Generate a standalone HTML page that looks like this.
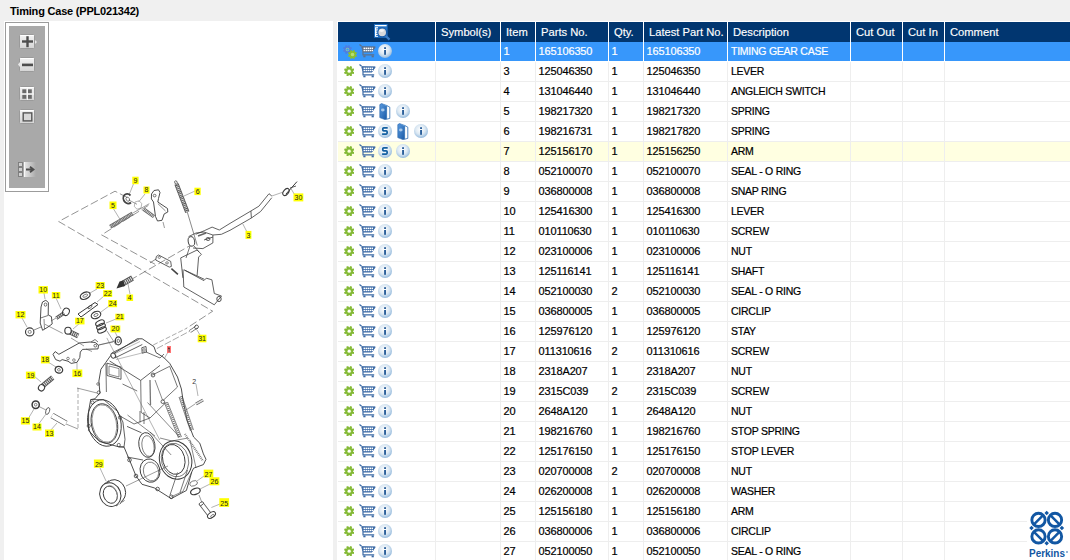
<!DOCTYPE html><html><head><meta charset="utf-8"><style>
*{margin:0;padding:0;box-sizing:border-box}
html,body{width:1070px;height:560px;overflow:hidden;background:#f0f0f0;font-family:"Liberation Sans",sans-serif;position:relative}
.abs{position:absolute}
.ic{position:absolute}
#title{position:absolute;left:10px;top:4px;font-size:11px;font-weight:bold;color:#000;letter-spacing:-0.2px;white-space:nowrap;line-height:14px}
#left{position:absolute;left:4px;top:21px;width:329px;height:539px;background:#fff;overflow:hidden}
#tb{position:absolute;left:1px;top:1px;width:44px;height:170px;border:1px solid #9c9c9c;background:#fff}
#tbi{position:absolute;left:3px;top:3px;width:36px;height:162px;background:#a9a9a9}
#tbl{position:absolute;left:337px;top:21px;width:733px;height:539px;background:#fff;border-top:1px solid #fff;overflow:hidden}
.hd{position:absolute;top:22px;height:20px;background:#013670}
.ht{position:absolute;top:22px;height:20px;line-height:20px;color:#fff;font-size:11.2px;white-space:nowrap;-webkit-text-stroke:0.15px #fff}
.row{position:absolute;left:338px;width:732px;height:20px;border-bottom:1px solid #eeeeee}
.c{position:absolute;height:19px;line-height:19px;font-size:11px;letter-spacing:-0.15px;color:#000;white-space:nowrap;-webkit-text-stroke:0.2px currentColor}
.d{font-size:10.5px;letter-spacing:-0.25px}
.vs{position:absolute;width:1px}
</style></head><body>
<div id="title">Timing Case (PPL021342)</div>
<div id="left">
<div id="tb"><div id="tbi"></div></div>
<svg style="position:absolute;left:-4px;top:-21px" width="340" height="560" viewBox="0 0 340 560"><path d="M127.0 197.4 L115.0 191.2 L58.7 221.5 L212.7 311.2 L186.0 328.6" fill="none" stroke="#666" stroke-width="0.7" stroke-dasharray="8 3"/><path d="M148.4 205.4 L101.6 234.9 L155.1 264.3" fill="none" stroke="#666" stroke-width="0.7" stroke-dasharray="8 3"/><path d="M120.3 285.8 L190.0 245.6" fill="none" stroke="#666" stroke-width="0.7" stroke-dasharray="8 3"/><path d="M133.7 183.4 L129.4 194.0" fill="none" stroke="#666" stroke-width="0.5"/><path d="M145.0 194.0 L138.5 202.0" fill="none" stroke="#666" stroke-width="0.5"/><path d="M113.0 208.0 L121.0 221.0" fill="none" stroke="#666" stroke-width="0.5"/><path d="M195.0 191.0 L184.0 196.0" fill="none" stroke="#666" stroke-width="0.5"/><path d="M242.8 223.9 L247.0 232.0" fill="none" stroke="#666" stroke-width="0.5"/><path d="M291.0 188.6 L294.2 194.0" fill="none" stroke="#666" stroke-width="0.5"/><path d="M271.8 196.0 L282.5 192.3" fill="none" stroke="#666" stroke-width="0.5"/><path d="M130.5 195.5 A4.2 5 -30 1 0 131 202.5" fill="none" stroke="#444" stroke-width="1.8"/><ellipse cx="127.8" cy="199.2" rx="1.6" ry="2.2" transform="rotate(-30 127.8 199.2)" fill="none" stroke="#3a3a3a" stroke-width="0.6"/><path d="M128.9 200.0 L137.0 204.3" fill="none" stroke="#3a3a3a" stroke-width="0.5"/><path d="M135 202 L139 200.8 L141.8 203.5 L141 208 L137 209.2 L134.3 206.5 Z" fill="none" stroke="#999" stroke-width="0.7"/><path d="M133.2 212.8 L149.3 203.7" fill="none" stroke="#3a3a3a" stroke-width="0.5"/><path d="M110.2 226.7 L132.7 213.4" fill="none" stroke="#666" stroke-width="4"/><path d="M110.2 226.7 L132.7 213.4" fill="none" stroke="#d0d0d0" stroke-width="2.4" stroke-dasharray="0.8 0.8"/><path d="M151.5 194.0 L154.0 190.5 L158.5 189.8 L160.0 192.5 L158.5 198.5 L157.8 202.0 L167.5 208.5 L167.8 212.0 L164.2 213.9 L162.0 220.3 L157.5 221.0 L155.5 216.5 L153.5 202.0 L151.4 198.9 Z" fill="none" stroke="#3a3a3a" stroke-width="0.9"/><ellipse cx="154.6" cy="195.6" rx="1.4" ry="1.3" transform="rotate(0 154.6 195.6)" fill="none" stroke="#3a3a3a" stroke-width="0.7"/><path d="M157.8 203.5 L165.5 211.0" fill="none" stroke="#3a3a3a" stroke-width="0.6"/><path d="M143.4 209.0 L154.0 216.6" fill="none" stroke="#666" stroke-width="3.6"/><path d="M143.4 209.0 L154.0 216.6" fill="none" stroke="#e8e8e8" stroke-width="2.2" stroke-dasharray="0.8 0.8"/><path d="M163.0 222.0 L164.5 228.0" fill="none" stroke="#3a3a3a" stroke-width="0.5"/><path d="M176.5 184.0 L187.3 212.1" fill="none" stroke="#555" stroke-width="4.4"/><path d="M176.5 184.0 L187.3 212.1" fill="none" stroke="#d8d8d8" stroke-width="2.8" stroke-dasharray="0.9 0.9"/><ellipse cx="176" cy="182.5" rx="1.2" ry="1.8" transform="rotate(-20 176 182.5)" fill="none" stroke="#3a3a3a" stroke-width="0.7"/><path d="M187.3 212.1 L197.3 245.6" fill="none" stroke="#3a3a3a" stroke-width="0.6"/><path d="M195.7 234.3 L204.3 230.7 L212.1 227.1 L219.3 230.0 L230.0 223.4 L250.9 211.0 L258.9 206.2 L269.0 193.7 L271.8 196.0" fill="none" stroke="#3a3a3a" stroke-width="0.8"/><path d="M212.9 235.0 L221.4 234.3 L230.0 230.3 L251.4 218.0 L260.5 211.6 L271.8 197.7" fill="none" stroke="#3a3a3a" stroke-width="0.8"/><path d="M250.9 211.0 L251.4 218.0" fill="none" stroke="#3a3a3a" stroke-width="0.8"/><ellipse cx="191.4" cy="241.4" rx="3.2" ry="4.8" transform="rotate(-10 191.4 241.4)" fill="none" stroke="#3a3a3a" stroke-width="0.9"/><path d="M188.6 236.6 L196.0 233.0 L204.0 232.0 L212.9 235.0 L212.9 242.9 L202.9 248.6 L193.0 248.0" fill="none" stroke="#3a3a3a" stroke-width="0.8"/><path d="M198.0 236.0 L206.0 233.0" fill="none" stroke="#666" stroke-width="1.6"/><ellipse cx="208" cy="239" rx="2" ry="1.5" transform="rotate(0 208 239)" fill="none" stroke="#3a3a3a" stroke-width="0.8"/><path d="M204.0 240.0 L213.0 237.0" fill="none" stroke="#3a3a3a" stroke-width="0.8"/><path d="M180.7 257.9 L197.1 250.0 L201.4 254.3 L198.6 257.1" fill="none" stroke="#3a3a3a" stroke-width="0.8"/><path d="M180.7 257.9 L182.9 277.9" fill="none" stroke="#3a3a3a" stroke-width="0.8"/><path d="M198.6 257.1 L197.1 275.7" fill="none" stroke="#3a3a3a" stroke-width="0.8"/><path d="M190.0 246.0 L186.0 258.0" fill="none" stroke="#3a3a3a" stroke-width="0.7"/><path d="M194.0 246.0 L199.0 252.0" fill="none" stroke="#3a3a3a" stroke-width="0.7"/><path d="M183.0 269.4 L183.8 287.0 L214.3 304.8 L221.5 296.0 L214.3 293.5 L211.9 279.8 L206.3 278.2 L203.9 280.6 L184.3 270.0" fill="none" stroke="#3a3a3a" stroke-width="0.8"/><ellipse cx="219" cy="299" rx="2.2" ry="2.6" transform="rotate(0 219 299)" fill="none" stroke="#3a3a3a" stroke-width="0.9"/><path d="M156.4 256.4 L158.6 255.0 L170.7 261.4 L171.4 266.4 L169.3 267.1 L155.7 260.0 Z" fill="none" stroke="#3a3a3a" stroke-width="0.8"/><ellipse cx="159.3" cy="257.4" rx="1.2" ry="1" transform="rotate(0 159.3 257.4)" fill="none" stroke="#3a3a3a" stroke-width="0.6"/><ellipse cx="167" cy="262.9" rx="1.4" ry="1.1" transform="rotate(0 167 262.9)" fill="none" stroke="#3a3a3a" stroke-width="0.6"/><path d="M171.4 268.6 L177.9 274.3" fill="none" stroke="#444" stroke-width="1.6"/><path d="M150.0 262.9 L156.0 259.0" fill="none" stroke="#3a3a3a" stroke-width="0.6"/><path d="M184.3 270.0 L204.3 279.3" fill="none" stroke="#3a3a3a" stroke-width="0.8"/><path d="M122.0 284.0 L132.5 278.0" fill="none" stroke="#555" stroke-width="5.5"/><path d="M122.0 284.0 L132.5 278.0" fill="none" stroke="#e8e8e8" stroke-width="3.8" stroke-dasharray="1 1"/><path d="M116.5 288.5 L119.5 281.5 L123.5 280.5 L125 286 Z" fill="#333"/><path d="M128.0 284.0 L130.0 294.0" fill="none" stroke="#666" stroke-width="0.5"/><ellipse cx="286" cy="192" rx="2.4" ry="4" transform="rotate(40 286 192)" fill="none" stroke="#3a3a3a" stroke-width="1.1"/><path d="M286.0 194.0 L297.0 181.6" fill="none" stroke="#3a3a3a" stroke-width="1"/><path d="M290.0 188.0 L296.0 186.0" fill="none" stroke="#3a3a3a" stroke-width="0.8"/><path d="M41.0 307.0 L42.5 302.0 L45.8 300.3 L48.4 302.5 L48.2 315.0 L51.4 316.6 L52.2 323.9 L48.0 327.0 L42.6 330.3 L40.2 323.0 Z" fill="none" stroke="#3a3a3a" stroke-width="0.9"/><ellipse cx="45.5" cy="304.6" rx="1.3" ry="1.6" transform="rotate(0 45.5 304.6)" fill="none" stroke="#3a3a3a" stroke-width="0.7"/><path d="M40.6 318.0 L48.0 315.5" fill="none" stroke="#3a3a3a" stroke-width="0.7"/><path d="M44.0 319.0 L44.5 329.0" fill="none" stroke="#3a3a3a" stroke-width="0.6"/><path d="M44.0 293.0 L45.0 299.0" fill="none" stroke="#666" stroke-width="0.5"/><ellipse cx="29.7" cy="331.9" rx="4.2" ry="4" transform="rotate(0 29.7 331.9)" fill="none" stroke="#3a3a3a" stroke-width="1.1"/><ellipse cx="29.7" cy="331.9" rx="1.6" ry="1.5" transform="rotate(0 29.7 331.9)" fill="none" stroke="#3a3a3a" stroke-width="0.6"/><path d="M22.0 318.0 L27.0 327.0" fill="none" stroke="#666" stroke-width="0.5"/><path d="M34.0 330.0 L41.0 327.0" fill="none" stroke="#3a3a3a" stroke-width="0.6"/><path d="M56.3 318.2 L64.0 313.0" fill="none" stroke="#555" stroke-width="3.6"/><path d="M56.3 318.2 L64.0 313.0" fill="none" stroke="#ddd" stroke-width="2" stroke-dasharray="1 1"/><ellipse cx="66" cy="311.8" rx="3.2" ry="3.8" transform="rotate(30 66 311.8)" fill="none" stroke="#3a3a3a" stroke-width="1"/><path d="M56.0 298.0 L61.0 309.0" fill="none" stroke="#666" stroke-width="0.5"/><path d="M51.0 321.0 L56.0 318.0" fill="none" stroke="#3a3a3a" stroke-width="0.5"/><ellipse cx="85.2" cy="295.7" rx="5.2" ry="3.3" transform="rotate(-25 85.2 295.7)" fill="none" stroke="#3a3a3a" stroke-width="1.3"/><ellipse cx="85.2" cy="295.7" rx="2.6" ry="1.2" transform="rotate(-25 85.2 295.7)" fill="none" stroke="#3a3a3a" stroke-width="0.6"/><path d="M97.0 289.0 L90.0 293.0" fill="none" stroke="#666" stroke-width="0.5"/><path d="M78.0 314.0 L95.0 302.5 L98.0 304.5 L81.0 317.0 Z" fill="none" stroke="#3a3a3a" stroke-width="1"/><ellipse cx="90" cy="307" rx="2.5" ry="1" transform="rotate(-35 90 307)" fill="none" stroke="#3a3a3a" stroke-width="0.7"/><path d="M104.0 296.0 L97.0 302.0" fill="none" stroke="#666" stroke-width="0.5"/><ellipse cx="96" cy="315" rx="5" ry="3.4" transform="rotate(-25 96 315)" fill="none" stroke="#3a3a3a" stroke-width="1.2"/><ellipse cx="96" cy="315" rx="2.3" ry="1.3" transform="rotate(-25 96 315)" fill="none" stroke="#3a3a3a" stroke-width="0.6"/><path d="M109.0 306.0 L101.0 312.0" fill="none" stroke="#666" stroke-width="0.5"/><ellipse cx="100" cy="323" rx="4.6" ry="2.6" transform="rotate(-25 100 323)" fill="none" stroke="#3a3a3a" stroke-width="1.1"/><ellipse cx="101" cy="326.5" rx="4.6" ry="2.6" transform="rotate(-25 101 326.5)" fill="none" stroke="#3a3a3a" stroke-width="1.1"/><ellipse cx="102" cy="330" rx="4.6" ry="2.6" transform="rotate(-25 102 330)" fill="none" stroke="#3a3a3a" stroke-width="1.1"/><path d="M116.0 319.0 L106.0 323.0" fill="none" stroke="#666" stroke-width="0.5"/><path d="M68.0 331.0 L78.2 336.0" fill="none" stroke="#555" stroke-width="5"/><path d="M68.0 331.0 L78.2 336.0" fill="none" stroke="#e6e6e6" stroke-width="3.2" stroke-dasharray="1 1"/><ellipse cx="68" cy="330.7" rx="3.2" ry="3.4" transform="rotate(0 68 330.7)" fill="#fff" stroke="#3a3a3a" stroke-width="1.1"/><path d="M80.0 323.0 L73.0 329.0" fill="none" stroke="#666" stroke-width="0.5"/><ellipse cx="118.3" cy="340.9" rx="3" ry="4" transform="rotate(0 118.3 340.9)" fill="none" stroke="#3a3a3a" stroke-width="1.3"/><ellipse cx="118.3" cy="340.9" rx="1.2" ry="1.7" transform="rotate(0 118.3 340.9)" fill="none" stroke="#3a3a3a" stroke-width="0.7"/><path d="M115.0 332.0 L117.0 336.0" fill="none" stroke="#666" stroke-width="0.5"/><path d="M99.0 345.0 L115.0 341.0" fill="none" stroke="#3a3a3a" stroke-width="0.5"/><path d="M79.3 343.0 L90.0 342.0 L95.3 342.5 L98.5 345.2 L98.0 348.9 L82.5 349.4 L80.3 352.1 L79.8 357.5 L77.1 362.3 L71.2 363.4 L68.0 361.2 L62.1 359.6 L60.0 361.2 L55.7 359.6 L53.0 354.3 L55.2 351.6 L58.9 354.3 Z" fill="none" stroke="#3a3a3a" stroke-width="0.9"/><ellipse cx="95.3" cy="345.7" rx="1.4" ry="1.4" transform="rotate(0 95.3 345.7)" fill="none" stroke="#3a3a3a" stroke-width="0.7"/><ellipse cx="73.9" cy="360.1" rx="1.3" ry="1.3" transform="rotate(0 73.9 360.1)" fill="none" stroke="#3a3a3a" stroke-width="0.6"/><ellipse cx="68" cy="358.5" rx="1.3" ry="1.3" transform="rotate(0 68 358.5)" fill="none" stroke="#3a3a3a" stroke-width="0.6"/><path d="M91.0 342.0 L95.0 339.5 L98.0 342.0" fill="none" stroke="#3a3a3a" stroke-width="0.7"/><path d="M86.0 349.0 L92.0 351.5" fill="none" stroke="#3a3a3a" stroke-width="0.5"/><path d="M98.5 345.0 L113.0 342.0" fill="none" stroke="#3a3a3a" stroke-width="0.5"/><path d="M45.0 324.3 L62.7 333.4" fill="none" stroke="#3a3a3a" stroke-width="0.5"/><path d="M71.0 338.0 L84.0 346.0" fill="none" stroke="#3a3a3a" stroke-width="0.5"/><path d="M107.0 331.0 L116.0 345.0" fill="none" stroke="#3a3a3a" stroke-width="0.5"/><ellipse cx="58.9" cy="369.8" rx="3.8" ry="3.3" transform="rotate(20 58.9 369.8)" fill="none" stroke="#3a3a3a" stroke-width="1.3"/><ellipse cx="58.9" cy="369.8" rx="1.4" ry="1.2" transform="rotate(20 58.9 369.8)" fill="none" stroke="#3a3a3a" stroke-width="0.6"/><path d="M48.0 362.0 L56.0 367.0" fill="none" stroke="#666" stroke-width="0.5"/><path d="M42.5 386.0 L52.7 377.5" fill="none" stroke="#555" stroke-width="5"/><path d="M42.5 386.0 L52.7 377.5" fill="none" stroke="#e4e4e4" stroke-width="3.2" stroke-dasharray="1 1"/><ellipse cx="41.5" cy="387.8" rx="3" ry="3.2" transform="rotate(30 41.5 387.8)" fill="#fff" stroke="#3a3a3a" stroke-width="1.1"/><path d="M34.0 376.0 L41.0 382.0" fill="none" stroke="#666" stroke-width="0.5"/><path d="M77.0 370.0 L77.0 363.0" fill="none" stroke="#666" stroke-width="0.5"/><ellipse cx="35.7" cy="404.7" rx="3.6" ry="3.8" transform="rotate(0 35.7 404.7)" fill="none" stroke="#3a3a3a" stroke-width="1.5"/><ellipse cx="35.7" cy="404.7" rx="1.3" ry="1.4" transform="rotate(0 35.7 404.7)" fill="none" stroke="#3a3a3a" stroke-width="0.6"/><path d="M38.0 406.0 L46.0 410.0" fill="none" stroke="#3a3a3a" stroke-width="0.5"/><ellipse cx="47.7" cy="411" rx="1.8" ry="3.6" transform="rotate(20 47.7 411)" fill="none" stroke="#3a3a3a" stroke-width="0.7"/><path d="M52.0 415.5 L66.0 423.5" fill="none" stroke="#555" stroke-width="6"/><path d="M52.0 415.5 L66.0 423.5" fill="none" stroke="#fff" stroke-width="4.4"/><path d="M28.0 419.0 L34.0 409.0" fill="none" stroke="#666" stroke-width="0.5"/><path d="M38.0 425.0 L46.0 414.0" fill="none" stroke="#666" stroke-width="0.5"/><path d="M50.0 431.0 L57.0 423.0" fill="none" stroke="#666" stroke-width="0.5"/><path d="M66.0 424.0 L78.0 429.0" fill="none" stroke="#3a3a3a" stroke-width="0.5"/><path d="M78.0 388.0 L78.0 428.0" fill="none" stroke="#555" stroke-width="0.5" stroke-dasharray="4 2"/><path d="M77.0 388.0 L97.0 393.0" fill="none" stroke="#3a3a3a" stroke-width="0.5"/><path d="M110.7 355.5 L137.2 338.8 L142.2 338.8 L154.0 346.7 L156.0 352.6 L163.8 357.5 L169.7 363.4 L177.5 377.0 L181.4 389.0 L183.0 400.0 L187.0 420.0 L193.6 437.0 L199.8 443.2 L203.4 453.9 L206.0 459.3 L203.4 464.6 L193.6 468.2 L191.8 471.8 L186.4 490.5 L171.2 498.6 L154.3 487.9 L142.0 484.3 L136.0 476.0 L129.5 460.0 L124.0 447.0 L118.6 446.8 L99.3 441.4 L88.6 430.7 L88.6 411.4 L90.7 399.6 L95.0 398.8 L99.9 392.9 L98.9 381.0 L100.9 369.3 L105.8 362.4 Z" fill="none" stroke="#3a3a3a" stroke-width="0.9"/><path d="M111.8 353.0 L138.6 339.6" fill="none" stroke="#3a3a3a" stroke-width="0.8"/><path d="M115.0 357.9 L142.3 344.5" fill="none" stroke="#3a3a3a" stroke-width="0.8"/><path d="M113.0 354.6 L140.0 341.5" fill="none" stroke="#777" stroke-width="0.5"/><ellipse cx="113.2" cy="355.6" rx="2.2" ry="2.6" transform="rotate(-30 113.2 355.6)" fill="#fff" stroke="#3a3a3a" stroke-width="0.9"/><path d="M141.8 347.7 L146.0 346.5 L146.5 352.0 L142.2 353.2 Z" fill="none" stroke="#3a3a3a" stroke-width="0.8"/><ellipse cx="144" cy="350" rx="1.2" ry="1.4" transform="rotate(0 144 350)" fill="none" stroke="#3a3a3a" stroke-width="0.6"/><path d="M146.0 352.0 L160.0 358.0 L164.0 354.0" fill="none" stroke="#3a3a3a" stroke-width="0.7"/><path d="M109.6 361.0 L140.7 380.4 L160.0 365.4" fill="none" stroke="#3a3a3a" stroke-width="0.8"/><path d="M116.0 359.5 L146.0 352.0" fill="none" stroke="#777" stroke-width="0.5"/><path d="M107.0 363.2 L121.0 367.0 L121.0 379.3 L107.0 375.5 Z" fill="none" stroke="#3a3a3a" stroke-width="0.8"/><path d="M109.0 366.0 L119.0 368.6 L119.0 377.0 L109.0 374.4 Z" fill="none" stroke="#3a3a3a" stroke-width="0.6"/><path d="M105.9 363.2 L106.4 392.0" fill="none" stroke="#3a3a3a" stroke-width="0.7"/><path d="M140.7 380.4 L141.2 412.5" fill="none" stroke="#3a3a3a" stroke-width="0.7"/><path d="M122.5 384.0 L137.2 391.0" fill="none" stroke="#3a3a3a" stroke-width="0.7"/><path d="M152.0 375.2 L169.7 366.3 L177.5 387.0 L162.8 400.7" fill="none" stroke="#3a3a3a" stroke-width="0.7"/><path d="M150.0 380.0 L150.5 405.0" fill="none" stroke="#777" stroke-width="1.3"/><path d="M106.8 337.9 L159.8 440.0" fill="none" stroke="#666" stroke-width="0.5"/><ellipse cx="153" cy="375" rx="1.8" ry="2" transform="rotate(0 153 375)" fill="none" stroke="#3a3a3a" stroke-width="0.8"/><ellipse cx="162.8" cy="401.7" rx="1.8" ry="1.8" transform="rotate(0 162.8 401.7)" fill="none" stroke="#3a3a3a" stroke-width="0.8"/><ellipse cx="98" cy="384" rx="1.3" ry="1.3" transform="rotate(0 98 384)" fill="none" stroke="#3a3a3a" stroke-width="0.6"/><path d="M141.2 412.5 L150.0 418.0 L165.7 402.7" fill="none" stroke="#3a3a3a" stroke-width="0.7"/><path d="M164.5 403.0 L178.5 438.0" fill="none" stroke="#3a3a3a" stroke-width="0.6"/><path d="M167.5 402.0 L181.5 437.0" fill="none" stroke="#3a3a3a" stroke-width="0.6"/><path d="M166.0 402.5 L180.0 437.5" fill="none" stroke="#666" stroke-width="2.4" stroke-dasharray="0.9 1.1"/><path d="M179.0 397.0 L190.5 431.0" fill="none" stroke="#3a3a3a" stroke-width="0.6"/><path d="M182.0 396.0 L193.5 430.0" fill="none" stroke="#3a3a3a" stroke-width="0.6"/><path d="M180.5 396.5 L192.0 430.5" fill="none" stroke="#666" stroke-width="2.4" stroke-dasharray="0.9 1.1"/><path d="M120.0 416.0 L134.0 424.0 L150.0 418.0" fill="none" stroke="#3a3a3a" stroke-width="0.7"/><path d="M118.6 446.8 L124.0 447.0 L125.0 439.3 L122.9 422.0 L117.5 411.4 L103.6 399.6 L90.7 399.6" fill="none" stroke="#3a3a3a" stroke-width="0.8"/><ellipse cx="104.4" cy="423" rx="16.5" ry="23.5" transform="rotate(-12 104.4 423)" fill="none" stroke="#3a3a3a" stroke-width="0.9"/><ellipse cx="104.4" cy="423.5" rx="13" ry="20" transform="rotate(-12 104.4 423.5)" fill="none" stroke="#3a3a3a" stroke-width="0.9"/><ellipse cx="104.4" cy="423.5" rx="12" ry="19" transform="rotate(-12 104.4 423.5)" fill="none" stroke="#3a3a3a" stroke-width="0.5"/><ellipse cx="92.5" cy="402.5" rx="1.6" ry="1.6" transform="rotate(0 92.5 402.5)" fill="none" stroke="#3a3a3a" stroke-width="0.7"/><ellipse cx="88.75" cy="426" rx="1.6" ry="1.6" transform="rotate(0 88.75 426)" fill="none" stroke="#3a3a3a" stroke-width="0.7"/><ellipse cx="118.75" cy="445" rx="1.6" ry="1.6" transform="rotate(0 118.75 445)" fill="none" stroke="#3a3a3a" stroke-width="0.7"/><ellipse cx="120" cy="417.5" rx="1.6" ry="1.6" transform="rotate(0 120 417.5)" fill="none" stroke="#3a3a3a" stroke-width="0.7"/><ellipse cx="98.75" cy="392.5" rx="1.6" ry="1.6" transform="rotate(0 98.75 392.5)" fill="none" stroke="#3a3a3a" stroke-width="0.7"/><path d="M127.0 426.4 L141.5 432.8" fill="none" stroke="#3a3a3a" stroke-width="0.8"/><path d="M127.0 457.0 L143.0 460.0" fill="none" stroke="#3a3a3a" stroke-width="0.8"/><ellipse cx="146.9" cy="445" rx="8" ry="12.5" transform="rotate(-10 146.9 445)" fill="none" stroke="#3a3a3a" stroke-width="0.9"/><ellipse cx="148" cy="446" rx="6" ry="10.5" transform="rotate(-10 148 446)" fill="none" stroke="#3a3a3a" stroke-width="0.6"/><path d="M140.0 411.0 L140.0 422.5" fill="none" stroke="#3a3a3a" stroke-width="0.7"/><path d="M144.0 412.0 L144.0 424.0" fill="none" stroke="#3a3a3a" stroke-width="0.7"/><ellipse cx="175.6" cy="460" rx="16" ry="19.5" transform="rotate(-15 175.6 460)" fill="none" stroke="#3a3a3a" stroke-width="1"/><ellipse cx="175" cy="460" rx="13.5" ry="17" transform="rotate(-15 175 460)" fill="none" stroke="#3a3a3a" stroke-width="0.6"/><ellipse cx="173.75" cy="459.4" rx="11" ry="15.2" transform="rotate(-15 173.75 459.4)" fill="none" stroke="#3a3a3a" stroke-width="0.9"/><path d="M190.0 440.0 L196.0 468.0" fill="none" stroke="#3a3a3a" stroke-width="0.6"/><path d="M177.5 472.5 L170.0 495.0" fill="none" stroke="#3a3a3a" stroke-width="0.7"/><path d="M187.5 470.0 L180.0 492.5" fill="none" stroke="#3a3a3a" stroke-width="0.7"/><path d="M147.5 402.5 L180.0 437.5" fill="none" stroke="#3a3a3a" stroke-width="0.6"/><path d="M127.5 415.0 L155.0 436.0" fill="none" stroke="#3a3a3a" stroke-width="0.6"/><path d="M155.0 380.0 L162.5 400.0" fill="none" stroke="#3a3a3a" stroke-width="0.6"/><path d="M185.0 434.0 L203.0 461.0" fill="none" stroke="#777" stroke-width="2.2" stroke-dasharray="0.8 1"/><path d="M160.0 438.0 L172.0 441.0 L188.0 438.0" fill="none" stroke="#3a3a3a" stroke-width="0.6"/><ellipse cx="150" cy="470.6" rx="9.8" ry="11.8" transform="rotate(-15 150 470.6)" fill="none" stroke="#3a3a3a" stroke-width="0.9"/><ellipse cx="151" cy="471.5" rx="7.5" ry="9.5" transform="rotate(-15 151 471.5)" fill="none" stroke="#3a3a3a" stroke-width="0.6"/><ellipse cx="129.5" cy="460" rx="1.8" ry="1.8" transform="rotate(0 129.5 460)" fill="none" stroke="#3a3a3a" stroke-width="0.8"/><ellipse cx="136" cy="476" rx="1.8" ry="1.8" transform="rotate(0 136 476)" fill="none" stroke="#3a3a3a" stroke-width="0.8"/><ellipse cx="157.6" cy="489" rx="1.8" ry="1.8" transform="rotate(0 157.6 489)" fill="none" stroke="#3a3a3a" stroke-width="0.8"/><ellipse cx="171.25" cy="496.8" rx="1.8" ry="1.8" transform="rotate(0 171.25 496.8)" fill="none" stroke="#3a3a3a" stroke-width="0.8"/><path d="M182.9 491.4 L191.8 471.8" fill="none" stroke="#3a3a3a" stroke-width="0.6"/><path d="M182.9 491.4 L171.2 496.8" fill="none" stroke="#3a3a3a" stroke-width="0.6"/><path d="M171.2 455.0 L150.0 432.0" fill="none" stroke="#3a3a3a" stroke-width="0.6"/><path d="M196.0 384.0 L198.0 396.0" fill="none" stroke="#666" stroke-width="0.5"/><path d="M196.0 404.0 L203.0 400.0" fill="none" stroke="#555" stroke-width="3"/><path d="M196.0 404.0 L203.0 400.0" fill="none" stroke="#ddd" stroke-width="1.6"/><path d="M186.0 410.0 L195.0 404.0" fill="none" stroke="#3a3a3a" stroke-width="0.5"/><path d="M153.2 345.0 L186.0 328.6" fill="none" stroke="#555" stroke-width="0.5" stroke-dasharray="5 2"/><path d="M156.8 348.6 L190.0 331.0" fill="none" stroke="#555" stroke-width="0.5" stroke-dasharray="7 2"/><path d="M190.0 331.5 L196.0 327.5" fill="none" stroke="#555" stroke-width="3.2"/><path d="M190.0 331.5 L196.0 327.5" fill="none" stroke="#fff" stroke-width="1.8"/><ellipse cx="196.5" cy="327" rx="1.8" ry="2" transform="rotate(30 196.5 327)" fill="none" stroke="#3a3a3a" stroke-width="0.8"/><path d="M197.0 330.0 L200.0 335.0" fill="none" stroke="#666" stroke-width="0.5"/><path d="M167.5 353.0 L164.0 359.0" fill="none" stroke="#666" stroke-width="0.5"/><ellipse cx="115" cy="491.5" rx="10.4" ry="12" transform="rotate(-20 115 491.5)" fill="#fff" stroke="#3a3a3a" stroke-width="0.9"/><path d="M101 489 L106 486 M119.5 503.5 L124.5 500.5 M104 484 L109 480.5 M116 506 L121 503" stroke="#3a3a3a" stroke-width="0.7"/><polygon points="101,490 106,485 125,494 119,505" fill="#fff"/><ellipse cx="110.3" cy="494.6" rx="10.4" ry="12" transform="rotate(-20 110.3 494.6)" fill="#fff" stroke="#3a3a3a" stroke-width="1"/><ellipse cx="110.3" cy="494.7" rx="6.8" ry="8.8" transform="rotate(-20 110.3 494.7)" fill="none" stroke="#3a3a3a" stroke-width="0.9"/><path d="M107.5 486.5 A5 8 -20 0 1 116 501" fill="none" stroke="#888" stroke-width="0.6"/><path d="M100.0 468.0 L106.0 481.0" fill="none" stroke="#666" stroke-width="0.5"/><path d="M126.0 486.0 L168.0 466.0" fill="none" stroke="#3a3a3a" stroke-width="0.5"/><ellipse cx="193.6" cy="483.4" rx="4" ry="2.5" transform="rotate(-20 193.6 483.4)" fill="none" stroke="#3a3a3a" stroke-width="0.6"/><ellipse cx="195.4" cy="491.4" rx="5" ry="3" transform="rotate(-20 195.4 491.4)" fill="none" stroke="#3a3a3a" stroke-width="1.3"/><path d="M199.0 495.0 L202.5 504.0" fill="none" stroke="#3a3a3a" stroke-width="0.5"/><path d="M201.5 504.0 L209.5 514.5" fill="none" stroke="#555" stroke-width="5"/><path d="M201.5 504.0 L209.5 514.5" fill="none" stroke="#fff" stroke-width="3.4"/><ellipse cx="201.3" cy="503.7" rx="2.4" ry="1.5" transform="rotate(-35 201.3 503.7)" fill="#fff" stroke="#3a3a3a" stroke-width="0.8"/><ellipse cx="211.5" cy="515" rx="4.5" ry="2.6" transform="rotate(-35 211.5 515)" fill="#fff" stroke="#3a3a3a" stroke-width="1"/><ellipse cx="212.5" cy="516" rx="2" ry="1.2" transform="rotate(-35 212.5 516)" fill="none" stroke="#3a3a3a" stroke-width="0.6"/><path d="M211.4 507.5 L220.0 504.0" fill="none" stroke="#666" stroke-width="0.5"/><path d="M197.0 481.0 L204.0 476.0" fill="none" stroke="#666" stroke-width="0.5"/><path d="M200.0 489.0 L210.0 484.0" fill="none" stroke="#666" stroke-width="0.5"/><rect x="132.3" y="176.7" width="6.3" height="7.5" fill="#ffff00"/><text x="135.4" y="183.1" text-anchor="middle" font-size="7" font-family="Liberation Sans" fill="#222">9</text><rect x="143.5" y="186.5" width="6.0" height="7.0" fill="#ffff00"/><text x="146.5" y="192.4" text-anchor="middle" font-size="7" font-family="Liberation Sans" fill="#222">8</text><rect x="109.5" y="201.5" width="7.0" height="7.6" fill="#ffff00"/><text x="113.0" y="208.0" text-anchor="middle" font-size="7" font-family="Liberation Sans" fill="#222">5</text><rect x="194.4" y="187.7" width="6.3" height="7.4" fill="#ffff00"/><text x="197.6" y="194.0" text-anchor="middle" font-size="7" font-family="Liberation Sans" fill="#222">6</text><rect x="245.5" y="230.9" width="5.9" height="8.0" fill="#ffff00"/><text x="248.4" y="237.8" text-anchor="middle" font-size="7" font-family="Liberation Sans" fill="#222">3</text><rect x="293.5" y="193.4" width="9.8" height="8.0" fill="#ffff00"/><text x="298.4" y="200.3" text-anchor="middle" font-size="7" font-family="Liberation Sans" fill="#222">30</text><rect x="38.5" y="286.1" width="9.4" height="7.4" fill="#ffff00"/><text x="43.2" y="292.4" text-anchor="middle" font-size="7" font-family="Liberation Sans" fill="#222">10</text><rect x="51.8" y="292.0" width="8.5" height="6.6" fill="#ffff00"/><text x="56.0" y="297.5" text-anchor="middle" font-size="7" font-family="Liberation Sans" fill="#222">11</text><rect x="15.5" y="311.0" width="10.0" height="7.4" fill="#ffff00"/><text x="20.5" y="317.3" text-anchor="middle" font-size="7" font-family="Liberation Sans" fill="#222">12</text><rect x="95.6" y="282.0" width="9.1" height="7.0" fill="#ffff00"/><text x="100.2" y="287.9" text-anchor="middle" font-size="7" font-family="Liberation Sans" fill="#222">23</text><rect x="103.2" y="290.1" width="9.0" height="6.9" fill="#ffff00"/><text x="107.7" y="295.9" text-anchor="middle" font-size="7" font-family="Liberation Sans" fill="#222">22</text><rect x="108.2" y="300.0" width="8.9" height="7.2" fill="#ffff00"/><text x="112.7" y="306.1" text-anchor="middle" font-size="7" font-family="Liberation Sans" fill="#222">24</text><rect x="115.3" y="313.7" width="9.0" height="6.6" fill="#ffff00"/><text x="119.8" y="319.2" text-anchor="middle" font-size="7" font-family="Liberation Sans" fill="#222">21</text><rect x="75.1" y="317.7" width="9.4" height="6.7" fill="#ffff00"/><text x="79.8" y="323.3" text-anchor="middle" font-size="7" font-family="Liberation Sans" fill="#222">17</text><rect x="110.5" y="325.5" width="9.8" height="6.9" fill="#ffff00"/><text x="115.4" y="331.3" text-anchor="middle" font-size="7" font-family="Liberation Sans" fill="#222">20</text><rect x="126.5" y="294.5" width="6.6" height="6.5" fill="#ffff00"/><text x="129.8" y="299.9" text-anchor="middle" font-size="7" font-family="Liberation Sans" fill="#222">4</text><rect x="40.9" y="355.9" width="8.7" height="7.5" fill="#ffff00"/><text x="45.2" y="362.3" text-anchor="middle" font-size="7" font-family="Liberation Sans" fill="#222">18</text><rect x="25.9" y="371.6" width="9.4" height="7.3" fill="#ffff00"/><text x="30.6" y="377.8" text-anchor="middle" font-size="7" font-family="Liberation Sans" fill="#222">19</text><rect x="72.4" y="369.5" width="9.9" height="7.6" fill="#ffff00"/><text x="77.3" y="376.0" text-anchor="middle" font-size="7" font-family="Liberation Sans" fill="#222">16</text><rect x="20.9" y="417.2" width="9.1" height="7.3" fill="#ffff00"/><text x="25.4" y="423.4" text-anchor="middle" font-size="7" font-family="Liberation Sans" fill="#222">15</text><rect x="32.5" y="423.5" width="9.0" height="7.0" fill="#ffff00"/><text x="37.0" y="429.4" text-anchor="middle" font-size="7" font-family="Liberation Sans" fill="#222">14</text><rect x="45.0" y="429.5" width="9.1" height="7.4" fill="#ffff00"/><text x="49.5" y="435.8" text-anchor="middle" font-size="7" font-family="Liberation Sans" fill="#222">13</text><rect x="197.7" y="334.7" width="8.7" height="7.6" fill="#ffff00"/><text x="202.1" y="341.2" text-anchor="middle" font-size="7" font-family="Liberation Sans" fill="#222">31</text><rect x="93.9" y="459.5" width="9.8" height="8.3" fill="#ffff00"/><text x="98.8" y="466.7" text-anchor="middle" font-size="7" font-family="Liberation Sans" fill="#222">29</text><rect x="203.7" y="469.6" width="9.6" height="8.0" fill="#ffff00"/><text x="208.5" y="476.5" text-anchor="middle" font-size="7" font-family="Liberation Sans" fill="#222">27</text><rect x="209.5" y="477.3" width="9.9" height="8.0" fill="#ffff00"/><text x="214.4" y="484.2" text-anchor="middle" font-size="7" font-family="Liberation Sans" fill="#222">26</text><rect x="219.3" y="498.2" width="9.8" height="8.7" fill="#ffff00"/><text x="224.2" y="505.8" text-anchor="middle" font-size="7" font-family="Liberation Sans" fill="#222">25</text><rect x="167" y="346" width="4" height="7" fill="#ff7272"/><rect x="168.6" y="348" width="1" height="4" fill="#555"/><rect x="168.2" y="347.6" width="1.4" height="1.1" fill="#300"/><text x="194.3" y="383.5" text-anchor="middle" font-size="7" font-family="Liberation Sans" fill="#333">2</text></svg>
</div>

<div class="abs" style="left:333px;top:21px;width:4px;height:539px;background:#f0f0f0"></div>
<div class="abs" style="left:337px;top:21px;width:733px;height:539px;background:#fff"></div>
<div class="hd" style="left:338px;width:732px"></div>
<div class="ht" style="left:441px">Symbol(s)</div>
<div class="ht" style="left:506px">Item</div>
<div class="ht" style="left:541px">Parts No.</div>
<div class="ht" style="left:614px">Qty.</div>
<div class="ht" style="left:649px">Latest Part No.</div>
<div class="ht" style="left:733px">Description</div>
<div class="ht" style="left:856px">Cut Out</div>
<div class="ht" style="left:908px">Cut In</div>
<div class="ht" style="left:950px">Comment</div>
<svg class="ic" style="left:370px;top:22px" width="25" height="20" viewBox="0 0 25 20"><rect x="4" y="2" width="13.6" height="13.8" fill="#1f70c4"/><rect x="5" y="3" width="11.6" height="1.3" fill="#fff"/><rect x="5" y="5.2" width="3" height="9.6" fill="#fff"/><rect x="6.2" y="6.4" width="1.8" height="1" fill="#1f70c4"/><rect x="6.2" y="8.6" width="1.8" height="1" fill="#1f70c4"/><rect x="6.2" y="10.8" width="1.8" height="1" fill="#1f70c4"/><rect x="6.2" y="13" width="1.8" height="1" fill="#1f70c4"/><path d="M15.3 13.5 L19.5 17.6" stroke="#3b7cc6" stroke-width="2.2"/><circle cx="12.2" cy="10.4" r="4.4" fill="#d6d8db" stroke="#1b5eac" stroke-width="1.2"/><ellipse cx="11.6" cy="8.6" rx="2.4" ry="1.3" fill="#f4f4f4"/></svg>
<div class="row" style="top:42px;background:#3797fb;border-bottom-color:#fff"></div>
<div class="vs" style="left:435px;top:42px;height:20px;background:#fff"></div>
<div class="vs" style="left:500px;top:42px;height:20px;background:#fff"></div>
<div class="vs" style="left:535px;top:42px;height:20px;background:#fff"></div>
<div class="vs" style="left:608px;top:42px;height:20px;background:#fff"></div>
<div class="vs" style="left:643px;top:42px;height:20px;background:#fff"></div>
<div class="vs" style="left:727px;top:42px;height:20px;background:#fff"></div>
<div class="vs" style="left:850px;top:42px;height:20px;background:#fff"></div>
<div class="vs" style="left:902px;top:42px;height:20px;background:#fff"></div>
<div class="vs" style="left:944px;top:42px;height:20px;background:#fff"></div>
<div class="c" style="left:503.6px;top:42px;color:#fff">1</div>
<div class="c" style="left:538.6px;top:42px;color:#fff">165106350</div>
<div class="c" style="left:611.6px;top:42px;color:#fff">1</div>
<div class="c" style="left:646.6px;top:42px;color:#fff">165106350</div>
<div class="c d" style="left:731px;top:42px;color:#fff">TIMING GEAR CASE</div>
<svg class="ic" style="left:342.5px;top:44.5px" width="9" height="9" viewBox="0 0 11 11"><g fill="#4f7fe0" transform="rotate(22.5 5.5 5.5)"><circle cx="5.5" cy="5.5" r="4"/><rect x="4.3" y="0" width="2.4" height="11" rx="0.6"/><rect x="0" y="4.3" width="11" height="2.4" rx="0.6"/><rect x="4.3" y="0" width="2.4" height="11" rx="0.6" transform="rotate(45 5.5 5.5)"/><rect x="4.3" y="0" width="2.4" height="11" rx="0.6" transform="rotate(-45 5.5 5.5)"/></g><circle cx="5.5" cy="5.5" r="2.1" fill="#b5db7a"/><circle cx="5.5" cy="5.5" r="1.5" fill="#3797fb"/></svg>
<svg class="ic" style="left:347.5px;top:49.5px" width="9" height="9" viewBox="0 0 11 11"><g fill="#8cc030" transform="rotate(22.5 5.5 5.5)"><circle cx="5.5" cy="5.5" r="4"/><rect x="4.3" y="0" width="2.4" height="11" rx="0.6"/><rect x="0" y="4.3" width="11" height="2.4" rx="0.6"/><rect x="4.3" y="0" width="2.4" height="11" rx="0.6" transform="rotate(45 5.5 5.5)"/><rect x="4.3" y="0" width="2.4" height="11" rx="0.6" transform="rotate(-45 5.5 5.5)"/></g><circle cx="5.5" cy="5.5" r="2.1" fill="#b5db7a"/><circle cx="5.5" cy="5.5" r="1.5" fill="#b8e070"/></svg>
<svg class="ic" style="left:359px;top:44px" width="17" height="14" viewBox="0 0 17 14"><path d="M0.5 0.6 L2.6 2.2" stroke="#5f7089" stroke-width="1.3" fill="none"/><path d="M2.8 2.7 L16.2 2.9 L13 8 L4 8 Z" fill="#5f7089" stroke="#5f7089" stroke-width="1"/><rect x="4.55" y="3.5999999999999996" width="1.5" height="1.4" fill="#fff"/><rect x="6.55" y="3.5999999999999996" width="1.5" height="1.4" fill="#fff"/><rect x="8.55" y="3.5999999999999996" width="1.5" height="1.4" fill="#fff"/><rect x="10.55" y="3.5999999999999996" width="1.5" height="1.4" fill="#fff"/><rect x="12.55" y="3.5999999999999996" width="1.5" height="1.4" fill="#fff"/><rect x="4.55" y="5.8" width="1.5" height="1.4" fill="#fff"/><rect x="6.55" y="5.8" width="1.5" height="1.4" fill="#fff"/><rect x="8.55" y="5.8" width="1.5" height="1.4" fill="#fff"/><rect x="10.55" y="5.8" width="1.5" height="1.4" fill="#fff"/><rect x="12.55" y="5.8" width="1.5" height="1.4" fill="#fff"/><path d="M4 8 V10.8 H15.2" stroke="#5f7089" stroke-width="1.2" fill="none"/><rect x="4.3" y="11.5" width="2.2" height="1.8" fill="#5f7089"/><rect x="12.6" y="11.5" width="2.2" height="1.8" fill="#5f7089"/></svg>
<svg class="ic" style="left:378px;top:44px" width="14" height="14" viewBox="0 0 14 14"><defs><radialGradient id="g37844" cx="0.45" cy="0.4" r="0.6"><stop offset="0" stop-color="#ffffff"/><stop offset="0.55" stop-color="#dde9f3"/><stop offset="0.8" stop-color="#b8d1e8"/><stop offset="1" stop-color="#93b9dc"/></radialGradient></defs><circle cx="7" cy="7" r="7" fill="url(#g37844)"/><rect x="6.1" y="3.2" width="1.9" height="1.8" fill="#2b5f9a"/><rect x="6.1" y="6" width="1.9" height="4.8" fill="#2b5f9a"/></svg>
<div class="row" style="top:62px;background:#fff;border-bottom-color:#eeeeee"></div>
<div class="vs" style="left:435px;top:62px;height:20px;background:#eeeeee"></div>
<div class="vs" style="left:500px;top:62px;height:20px;background:#eeeeee"></div>
<div class="vs" style="left:535px;top:62px;height:20px;background:#eeeeee"></div>
<div class="vs" style="left:608px;top:62px;height:20px;background:#eeeeee"></div>
<div class="vs" style="left:643px;top:62px;height:20px;background:#eeeeee"></div>
<div class="vs" style="left:727px;top:62px;height:20px;background:#eeeeee"></div>
<div class="vs" style="left:850px;top:62px;height:20px;background:#eeeeee"></div>
<div class="vs" style="left:902px;top:62px;height:20px;background:#eeeeee"></div>
<div class="vs" style="left:944px;top:62px;height:20px;background:#eeeeee"></div>
<div class="c" style="left:503.6px;top:62px;color:#000">3</div>
<div class="c" style="left:538.6px;top:62px;color:#000">125046350</div>
<div class="c" style="left:611.6px;top:62px;color:#000">1</div>
<div class="c" style="left:646.6px;top:62px;color:#000">125046350</div>
<div class="c d" style="left:731px;top:62px;color:#000">LEVER</div>
<svg class="ic" style="left:343.7px;top:65.6px" width="10.4" height="10.4" viewBox="0 0 11 11"><g fill="#84b936" transform="rotate(22.5 5.5 5.5)"><circle cx="5.5" cy="5.5" r="4"/><rect x="4.3" y="0" width="2.4" height="11" rx="0.6"/><rect x="0" y="4.3" width="11" height="2.4" rx="0.6"/><rect x="4.3" y="0" width="2.4" height="11" rx="0.6" transform="rotate(45 5.5 5.5)"/><rect x="4.3" y="0" width="2.4" height="11" rx="0.6" transform="rotate(-45 5.5 5.5)"/></g><circle cx="5.5" cy="5.5" r="2.1" fill="#b5db7a"/><circle cx="5.5" cy="5.5" r="1.5" fill="#fff"/></svg>
<svg class="ic" style="left:359px;top:64px" width="17" height="14" viewBox="0 0 17 14"><path d="M0.5 0.6 L2.6 2.2" stroke="#3d6ba6" stroke-width="1.3" fill="none"/><path d="M2.8 2.7 L16.2 2.9 L13 8 L4 8 Z" fill="#3d6ba6" stroke="#3d6ba6" stroke-width="1"/><rect x="4.55" y="3.5999999999999996" width="1.5" height="1.4" fill="#fff"/><rect x="6.55" y="3.5999999999999996" width="1.5" height="1.4" fill="#fff"/><rect x="8.55" y="3.5999999999999996" width="1.5" height="1.4" fill="#fff"/><rect x="10.55" y="3.5999999999999996" width="1.5" height="1.4" fill="#fff"/><rect x="12.55" y="3.5999999999999996" width="1.5" height="1.4" fill="#fff"/><rect x="4.55" y="5.8" width="1.5" height="1.4" fill="#fff"/><rect x="6.55" y="5.8" width="1.5" height="1.4" fill="#fff"/><rect x="8.55" y="5.8" width="1.5" height="1.4" fill="#fff"/><rect x="10.55" y="5.8" width="1.5" height="1.4" fill="#fff"/><rect x="12.55" y="5.8" width="1.5" height="1.4" fill="#fff"/><path d="M4 8 V10.8 H15.2" stroke="#3d6ba6" stroke-width="1.2" fill="none"/><rect x="4.3" y="11.5" width="2.2" height="1.8" fill="#3d6ba6"/><rect x="12.6" y="11.5" width="2.2" height="1.8" fill="#3d6ba6"/></svg>
<svg class="ic" style="left:378px;top:64px" width="14" height="14" viewBox="0 0 14 14"><defs><radialGradient id="g37864" cx="0.45" cy="0.4" r="0.6"><stop offset="0" stop-color="#ffffff"/><stop offset="0.55" stop-color="#dde9f3"/><stop offset="0.8" stop-color="#b8d1e8"/><stop offset="1" stop-color="#93b9dc"/></radialGradient></defs><circle cx="7" cy="7" r="7" fill="url(#g37864)"/><rect x="6.1" y="3.2" width="1.9" height="1.8" fill="#2b5f9a"/><rect x="6.1" y="6" width="1.9" height="4.8" fill="#2b5f9a"/></svg>
<div class="row" style="top:82px;background:#fff;border-bottom-color:#eeeeee"></div>
<div class="vs" style="left:435px;top:82px;height:20px;background:#eeeeee"></div>
<div class="vs" style="left:500px;top:82px;height:20px;background:#eeeeee"></div>
<div class="vs" style="left:535px;top:82px;height:20px;background:#eeeeee"></div>
<div class="vs" style="left:608px;top:82px;height:20px;background:#eeeeee"></div>
<div class="vs" style="left:643px;top:82px;height:20px;background:#eeeeee"></div>
<div class="vs" style="left:727px;top:82px;height:20px;background:#eeeeee"></div>
<div class="vs" style="left:850px;top:82px;height:20px;background:#eeeeee"></div>
<div class="vs" style="left:902px;top:82px;height:20px;background:#eeeeee"></div>
<div class="vs" style="left:944px;top:82px;height:20px;background:#eeeeee"></div>
<div class="c" style="left:503.6px;top:82px;color:#000">4</div>
<div class="c" style="left:538.6px;top:82px;color:#000">131046440</div>
<div class="c" style="left:611.6px;top:82px;color:#000">1</div>
<div class="c" style="left:646.6px;top:82px;color:#000">131046440</div>
<div class="c d" style="left:731px;top:82px;color:#000">ANGLEICH SWITCH</div>
<svg class="ic" style="left:343.7px;top:85.6px" width="10.4" height="10.4" viewBox="0 0 11 11"><g fill="#84b936" transform="rotate(22.5 5.5 5.5)"><circle cx="5.5" cy="5.5" r="4"/><rect x="4.3" y="0" width="2.4" height="11" rx="0.6"/><rect x="0" y="4.3" width="11" height="2.4" rx="0.6"/><rect x="4.3" y="0" width="2.4" height="11" rx="0.6" transform="rotate(45 5.5 5.5)"/><rect x="4.3" y="0" width="2.4" height="11" rx="0.6" transform="rotate(-45 5.5 5.5)"/></g><circle cx="5.5" cy="5.5" r="2.1" fill="#b5db7a"/><circle cx="5.5" cy="5.5" r="1.5" fill="#fff"/></svg>
<svg class="ic" style="left:359px;top:84px" width="17" height="14" viewBox="0 0 17 14"><path d="M0.5 0.6 L2.6 2.2" stroke="#3d6ba6" stroke-width="1.3" fill="none"/><path d="M2.8 2.7 L16.2 2.9 L13 8 L4 8 Z" fill="#3d6ba6" stroke="#3d6ba6" stroke-width="1"/><rect x="4.55" y="3.5999999999999996" width="1.5" height="1.4" fill="#fff"/><rect x="6.55" y="3.5999999999999996" width="1.5" height="1.4" fill="#fff"/><rect x="8.55" y="3.5999999999999996" width="1.5" height="1.4" fill="#fff"/><rect x="10.55" y="3.5999999999999996" width="1.5" height="1.4" fill="#fff"/><rect x="12.55" y="3.5999999999999996" width="1.5" height="1.4" fill="#fff"/><rect x="4.55" y="5.8" width="1.5" height="1.4" fill="#fff"/><rect x="6.55" y="5.8" width="1.5" height="1.4" fill="#fff"/><rect x="8.55" y="5.8" width="1.5" height="1.4" fill="#fff"/><rect x="10.55" y="5.8" width="1.5" height="1.4" fill="#fff"/><rect x="12.55" y="5.8" width="1.5" height="1.4" fill="#fff"/><path d="M4 8 V10.8 H15.2" stroke="#3d6ba6" stroke-width="1.2" fill="none"/><rect x="4.3" y="11.5" width="2.2" height="1.8" fill="#3d6ba6"/><rect x="12.6" y="11.5" width="2.2" height="1.8" fill="#3d6ba6"/></svg>
<svg class="ic" style="left:378px;top:84px" width="14" height="14" viewBox="0 0 14 14"><defs><radialGradient id="g37884" cx="0.45" cy="0.4" r="0.6"><stop offset="0" stop-color="#ffffff"/><stop offset="0.55" stop-color="#dde9f3"/><stop offset="0.8" stop-color="#b8d1e8"/><stop offset="1" stop-color="#93b9dc"/></radialGradient></defs><circle cx="7" cy="7" r="7" fill="url(#g37884)"/><rect x="6.1" y="3.2" width="1.9" height="1.8" fill="#2b5f9a"/><rect x="6.1" y="6" width="1.9" height="4.8" fill="#2b5f9a"/></svg>
<div class="row" style="top:102px;background:#fff;border-bottom-color:#eeeeee"></div>
<div class="vs" style="left:435px;top:102px;height:20px;background:#eeeeee"></div>
<div class="vs" style="left:500px;top:102px;height:20px;background:#eeeeee"></div>
<div class="vs" style="left:535px;top:102px;height:20px;background:#eeeeee"></div>
<div class="vs" style="left:608px;top:102px;height:20px;background:#eeeeee"></div>
<div class="vs" style="left:643px;top:102px;height:20px;background:#eeeeee"></div>
<div class="vs" style="left:727px;top:102px;height:20px;background:#eeeeee"></div>
<div class="vs" style="left:850px;top:102px;height:20px;background:#eeeeee"></div>
<div class="vs" style="left:902px;top:102px;height:20px;background:#eeeeee"></div>
<div class="vs" style="left:944px;top:102px;height:20px;background:#eeeeee"></div>
<div class="c" style="left:503.6px;top:102px;color:#000">5</div>
<div class="c" style="left:538.6px;top:102px;color:#000">198217320</div>
<div class="c" style="left:611.6px;top:102px;color:#000">1</div>
<div class="c" style="left:646.6px;top:102px;color:#000">198217320</div>
<div class="c d" style="left:731px;top:102px;color:#000">SPRING</div>
<svg class="ic" style="left:343.7px;top:105.6px" width="10.4" height="10.4" viewBox="0 0 11 11"><g fill="#84b936" transform="rotate(22.5 5.5 5.5)"><circle cx="5.5" cy="5.5" r="4"/><rect x="4.3" y="0" width="2.4" height="11" rx="0.6"/><rect x="0" y="4.3" width="11" height="2.4" rx="0.6"/><rect x="4.3" y="0" width="2.4" height="11" rx="0.6" transform="rotate(45 5.5 5.5)"/><rect x="4.3" y="0" width="2.4" height="11" rx="0.6" transform="rotate(-45 5.5 5.5)"/></g><circle cx="5.5" cy="5.5" r="2.1" fill="#b5db7a"/><circle cx="5.5" cy="5.5" r="1.5" fill="#fff"/></svg>
<svg class="ic" style="left:359px;top:104px" width="17" height="14" viewBox="0 0 17 14"><path d="M0.5 0.6 L2.6 2.2" stroke="#3d6ba6" stroke-width="1.3" fill="none"/><path d="M2.8 2.7 L16.2 2.9 L13 8 L4 8 Z" fill="#3d6ba6" stroke="#3d6ba6" stroke-width="1"/><rect x="4.55" y="3.5999999999999996" width="1.5" height="1.4" fill="#fff"/><rect x="6.55" y="3.5999999999999996" width="1.5" height="1.4" fill="#fff"/><rect x="8.55" y="3.5999999999999996" width="1.5" height="1.4" fill="#fff"/><rect x="10.55" y="3.5999999999999996" width="1.5" height="1.4" fill="#fff"/><rect x="12.55" y="3.5999999999999996" width="1.5" height="1.4" fill="#fff"/><rect x="4.55" y="5.8" width="1.5" height="1.4" fill="#fff"/><rect x="6.55" y="5.8" width="1.5" height="1.4" fill="#fff"/><rect x="8.55" y="5.8" width="1.5" height="1.4" fill="#fff"/><rect x="10.55" y="5.8" width="1.5" height="1.4" fill="#fff"/><rect x="12.55" y="5.8" width="1.5" height="1.4" fill="#fff"/><path d="M4 8 V10.8 H15.2" stroke="#3d6ba6" stroke-width="1.2" fill="none"/><rect x="4.3" y="11.5" width="2.2" height="1.8" fill="#3d6ba6"/><rect x="12.6" y="11.5" width="2.2" height="1.8" fill="#3d6ba6"/></svg>
<svg class="ic" style="left:379px;top:103px" width="12" height="17" viewBox="0 0 12 17"><defs><linearGradient id="bk" x1="0" y1="0" x2="1" y2="1"><stop offset="0" stop-color="#5a9be0"/><stop offset="1" stop-color="#1a5aa6"/></linearGradient></defs><path d="M0.8 1.6 L2.6 0.6 L7.6 2.4 L7.6 16.2 L5.8 16.6 L0.8 14.6 Z" fill="url(#bk)" stroke="#2060a8" stroke-width="0.6"/><path d="M7.6 2.4 L10.8 4.2 L10.8 15.4 L7.6 16.2 Z" fill="#fff" stroke="#2a6ab0" stroke-width="0.8"/><path d="M2.6 0.6 L7.6 2.4 L10.8 4.2 L6 2.4 Z" fill="#7ab0e6"/><ellipse cx="3.8" cy="7" rx="1.8" ry="1.4" fill="#a9c9ea"/></svg>
<svg class="ic" style="left:396px;top:104px" width="14" height="14" viewBox="0 0 14 14"><defs><radialGradient id="g396104" cx="0.45" cy="0.4" r="0.6"><stop offset="0" stop-color="#ffffff"/><stop offset="0.55" stop-color="#dde9f3"/><stop offset="0.8" stop-color="#b8d1e8"/><stop offset="1" stop-color="#93b9dc"/></radialGradient></defs><circle cx="7" cy="7" r="7" fill="url(#g396104)"/><rect x="6.1" y="3.2" width="1.9" height="1.8" fill="#2b5f9a"/><rect x="6.1" y="6" width="1.9" height="4.8" fill="#2b5f9a"/></svg>
<div class="row" style="top:122px;background:#fff;border-bottom-color:#eeeeee"></div>
<div class="vs" style="left:435px;top:122px;height:20px;background:#eeeeee"></div>
<div class="vs" style="left:500px;top:122px;height:20px;background:#eeeeee"></div>
<div class="vs" style="left:535px;top:122px;height:20px;background:#eeeeee"></div>
<div class="vs" style="left:608px;top:122px;height:20px;background:#eeeeee"></div>
<div class="vs" style="left:643px;top:122px;height:20px;background:#eeeeee"></div>
<div class="vs" style="left:727px;top:122px;height:20px;background:#eeeeee"></div>
<div class="vs" style="left:850px;top:122px;height:20px;background:#eeeeee"></div>
<div class="vs" style="left:902px;top:122px;height:20px;background:#eeeeee"></div>
<div class="vs" style="left:944px;top:122px;height:20px;background:#eeeeee"></div>
<div class="c" style="left:503.6px;top:122px;color:#000">6</div>
<div class="c" style="left:538.6px;top:122px;color:#000">198216731</div>
<div class="c" style="left:611.6px;top:122px;color:#000">1</div>
<div class="c" style="left:646.6px;top:122px;color:#000">198217820</div>
<div class="c d" style="left:731px;top:122px;color:#000">SPRING</div>
<svg class="ic" style="left:343.7px;top:125.6px" width="10.4" height="10.4" viewBox="0 0 11 11"><g fill="#84b936" transform="rotate(22.5 5.5 5.5)"><circle cx="5.5" cy="5.5" r="4"/><rect x="4.3" y="0" width="2.4" height="11" rx="0.6"/><rect x="0" y="4.3" width="11" height="2.4" rx="0.6"/><rect x="4.3" y="0" width="2.4" height="11" rx="0.6" transform="rotate(45 5.5 5.5)"/><rect x="4.3" y="0" width="2.4" height="11" rx="0.6" transform="rotate(-45 5.5 5.5)"/></g><circle cx="5.5" cy="5.5" r="2.1" fill="#b5db7a"/><circle cx="5.5" cy="5.5" r="1.5" fill="#fff"/></svg>
<svg class="ic" style="left:359px;top:124px" width="17" height="14" viewBox="0 0 17 14"><path d="M0.5 0.6 L2.6 2.2" stroke="#3d6ba6" stroke-width="1.3" fill="none"/><path d="M2.8 2.7 L16.2 2.9 L13 8 L4 8 Z" fill="#3d6ba6" stroke="#3d6ba6" stroke-width="1"/><rect x="4.55" y="3.5999999999999996" width="1.5" height="1.4" fill="#fff"/><rect x="6.55" y="3.5999999999999996" width="1.5" height="1.4" fill="#fff"/><rect x="8.55" y="3.5999999999999996" width="1.5" height="1.4" fill="#fff"/><rect x="10.55" y="3.5999999999999996" width="1.5" height="1.4" fill="#fff"/><rect x="12.55" y="3.5999999999999996" width="1.5" height="1.4" fill="#fff"/><rect x="4.55" y="5.8" width="1.5" height="1.4" fill="#fff"/><rect x="6.55" y="5.8" width="1.5" height="1.4" fill="#fff"/><rect x="8.55" y="5.8" width="1.5" height="1.4" fill="#fff"/><rect x="10.55" y="5.8" width="1.5" height="1.4" fill="#fff"/><rect x="12.55" y="5.8" width="1.5" height="1.4" fill="#fff"/><path d="M4 8 V10.8 H15.2" stroke="#3d6ba6" stroke-width="1.2" fill="none"/><rect x="4.3" y="11.5" width="2.2" height="1.8" fill="#3d6ba6"/><rect x="12.6" y="11.5" width="2.2" height="1.8" fill="#3d6ba6"/></svg>
<svg class="ic" style="left:378px;top:124px" width="14" height="14" viewBox="0 0 14 14"><defs><radialGradient id="g378124" cx="0.45" cy="0.4" r="0.6"><stop offset="0" stop-color="#ffffff"/><stop offset="0.55" stop-color="#dde9f3"/><stop offset="0.8" stop-color="#b8d1e8"/><stop offset="1" stop-color="#93b9dc"/></radialGradient></defs><circle cx="7" cy="7" r="7" fill="url(#g378124)"/><path d="M9.7 3.8 H5.7 Q4.8 3.8 4.8 4.7 V5.9 Q4.8 6.8 5.7 6.8 H8.2 Q9.1 6.8 9.1 7.7 V9.1 Q9.1 10 8.2 10 H4.1" fill="none" stroke="#1360a2" stroke-width="1.75"/></svg>
<svg class="ic" style="left:397px;top:123px" width="12" height="17" viewBox="0 0 12 17"><defs><linearGradient id="bk" x1="0" y1="0" x2="1" y2="1"><stop offset="0" stop-color="#5a9be0"/><stop offset="1" stop-color="#1a5aa6"/></linearGradient></defs><path d="M0.8 1.6 L2.6 0.6 L7.6 2.4 L7.6 16.2 L5.8 16.6 L0.8 14.6 Z" fill="url(#bk)" stroke="#2060a8" stroke-width="0.6"/><path d="M7.6 2.4 L10.8 4.2 L10.8 15.4 L7.6 16.2 Z" fill="#fff" stroke="#2a6ab0" stroke-width="0.8"/><path d="M2.6 0.6 L7.6 2.4 L10.8 4.2 L6 2.4 Z" fill="#7ab0e6"/><ellipse cx="3.8" cy="7" rx="1.8" ry="1.4" fill="#a9c9ea"/></svg>
<svg class="ic" style="left:414px;top:124px" width="14" height="14" viewBox="0 0 14 14"><defs><radialGradient id="g414124" cx="0.45" cy="0.4" r="0.6"><stop offset="0" stop-color="#ffffff"/><stop offset="0.55" stop-color="#dde9f3"/><stop offset="0.8" stop-color="#b8d1e8"/><stop offset="1" stop-color="#93b9dc"/></radialGradient></defs><circle cx="7" cy="7" r="7" fill="url(#g414124)"/><rect x="6.1" y="3.2" width="1.9" height="1.8" fill="#2b5f9a"/><rect x="6.1" y="6" width="1.9" height="4.8" fill="#2b5f9a"/></svg>
<div class="row" style="top:142px;background:#ffffe1;border-bottom-color:#eeeeee"></div>
<div class="vs" style="left:435px;top:142px;height:20px;background:#eeeeee"></div>
<div class="vs" style="left:500px;top:142px;height:20px;background:#eeeeee"></div>
<div class="vs" style="left:535px;top:142px;height:20px;background:#eeeeee"></div>
<div class="vs" style="left:608px;top:142px;height:20px;background:#eeeeee"></div>
<div class="vs" style="left:643px;top:142px;height:20px;background:#eeeeee"></div>
<div class="vs" style="left:727px;top:142px;height:20px;background:#eeeeee"></div>
<div class="vs" style="left:850px;top:142px;height:20px;background:#eeeeee"></div>
<div class="vs" style="left:902px;top:142px;height:20px;background:#eeeeee"></div>
<div class="vs" style="left:944px;top:142px;height:20px;background:#eeeeee"></div>
<div class="c" style="left:503.6px;top:142px;color:#000">7</div>
<div class="c" style="left:538.6px;top:142px;color:#000">125156170</div>
<div class="c" style="left:611.6px;top:142px;color:#000">1</div>
<div class="c" style="left:646.6px;top:142px;color:#000">125156250</div>
<div class="c d" style="left:731px;top:142px;color:#000">ARM</div>
<svg class="ic" style="left:343.7px;top:145.6px" width="10.4" height="10.4" viewBox="0 0 11 11"><g fill="#84b936" transform="rotate(22.5 5.5 5.5)"><circle cx="5.5" cy="5.5" r="4"/><rect x="4.3" y="0" width="2.4" height="11" rx="0.6"/><rect x="0" y="4.3" width="11" height="2.4" rx="0.6"/><rect x="4.3" y="0" width="2.4" height="11" rx="0.6" transform="rotate(45 5.5 5.5)"/><rect x="4.3" y="0" width="2.4" height="11" rx="0.6" transform="rotate(-45 5.5 5.5)"/></g><circle cx="5.5" cy="5.5" r="2.1" fill="#b5db7a"/><circle cx="5.5" cy="5.5" r="1.5" fill="#ffffe1"/></svg>
<svg class="ic" style="left:359px;top:144px" width="17" height="14" viewBox="0 0 17 14"><path d="M0.5 0.6 L2.6 2.2" stroke="#3d6ba6" stroke-width="1.3" fill="none"/><path d="M2.8 2.7 L16.2 2.9 L13 8 L4 8 Z" fill="#3d6ba6" stroke="#3d6ba6" stroke-width="1"/><rect x="4.55" y="3.5999999999999996" width="1.5" height="1.4" fill="#fff"/><rect x="6.55" y="3.5999999999999996" width="1.5" height="1.4" fill="#fff"/><rect x="8.55" y="3.5999999999999996" width="1.5" height="1.4" fill="#fff"/><rect x="10.55" y="3.5999999999999996" width="1.5" height="1.4" fill="#fff"/><rect x="12.55" y="3.5999999999999996" width="1.5" height="1.4" fill="#fff"/><rect x="4.55" y="5.8" width="1.5" height="1.4" fill="#fff"/><rect x="6.55" y="5.8" width="1.5" height="1.4" fill="#fff"/><rect x="8.55" y="5.8" width="1.5" height="1.4" fill="#fff"/><rect x="10.55" y="5.8" width="1.5" height="1.4" fill="#fff"/><rect x="12.55" y="5.8" width="1.5" height="1.4" fill="#fff"/><path d="M4 8 V10.8 H15.2" stroke="#3d6ba6" stroke-width="1.2" fill="none"/><rect x="4.3" y="11.5" width="2.2" height="1.8" fill="#3d6ba6"/><rect x="12.6" y="11.5" width="2.2" height="1.8" fill="#3d6ba6"/></svg>
<svg class="ic" style="left:378px;top:144px" width="14" height="14" viewBox="0 0 14 14"><defs><radialGradient id="g378144" cx="0.45" cy="0.4" r="0.6"><stop offset="0" stop-color="#ffffff"/><stop offset="0.55" stop-color="#dde9f3"/><stop offset="0.8" stop-color="#b8d1e8"/><stop offset="1" stop-color="#93b9dc"/></radialGradient></defs><circle cx="7" cy="7" r="7" fill="url(#g378144)"/><path d="M9.7 3.8 H5.7 Q4.8 3.8 4.8 4.7 V5.9 Q4.8 6.8 5.7 6.8 H8.2 Q9.1 6.8 9.1 7.7 V9.1 Q9.1 10 8.2 10 H4.1" fill="none" stroke="#1360a2" stroke-width="1.75"/></svg>
<svg class="ic" style="left:396px;top:144px" width="14" height="14" viewBox="0 0 14 14"><defs><radialGradient id="g396144" cx="0.45" cy="0.4" r="0.6"><stop offset="0" stop-color="#ffffff"/><stop offset="0.55" stop-color="#dde9f3"/><stop offset="0.8" stop-color="#b8d1e8"/><stop offset="1" stop-color="#93b9dc"/></radialGradient></defs><circle cx="7" cy="7" r="7" fill="url(#g396144)"/><rect x="6.1" y="3.2" width="1.9" height="1.8" fill="#2b5f9a"/><rect x="6.1" y="6" width="1.9" height="4.8" fill="#2b5f9a"/></svg>
<div class="row" style="top:162px;background:#fff;border-bottom-color:#eeeeee"></div>
<div class="vs" style="left:435px;top:162px;height:20px;background:#eeeeee"></div>
<div class="vs" style="left:500px;top:162px;height:20px;background:#eeeeee"></div>
<div class="vs" style="left:535px;top:162px;height:20px;background:#eeeeee"></div>
<div class="vs" style="left:608px;top:162px;height:20px;background:#eeeeee"></div>
<div class="vs" style="left:643px;top:162px;height:20px;background:#eeeeee"></div>
<div class="vs" style="left:727px;top:162px;height:20px;background:#eeeeee"></div>
<div class="vs" style="left:850px;top:162px;height:20px;background:#eeeeee"></div>
<div class="vs" style="left:902px;top:162px;height:20px;background:#eeeeee"></div>
<div class="vs" style="left:944px;top:162px;height:20px;background:#eeeeee"></div>
<div class="c" style="left:503.6px;top:162px;color:#000">8</div>
<div class="c" style="left:538.6px;top:162px;color:#000">052100070</div>
<div class="c" style="left:611.6px;top:162px;color:#000">1</div>
<div class="c" style="left:646.6px;top:162px;color:#000">052100070</div>
<div class="c d" style="left:731px;top:162px;color:#000">SEAL - O RING</div>
<svg class="ic" style="left:343.7px;top:165.6px" width="10.4" height="10.4" viewBox="0 0 11 11"><g fill="#84b936" transform="rotate(22.5 5.5 5.5)"><circle cx="5.5" cy="5.5" r="4"/><rect x="4.3" y="0" width="2.4" height="11" rx="0.6"/><rect x="0" y="4.3" width="11" height="2.4" rx="0.6"/><rect x="4.3" y="0" width="2.4" height="11" rx="0.6" transform="rotate(45 5.5 5.5)"/><rect x="4.3" y="0" width="2.4" height="11" rx="0.6" transform="rotate(-45 5.5 5.5)"/></g><circle cx="5.5" cy="5.5" r="2.1" fill="#b5db7a"/><circle cx="5.5" cy="5.5" r="1.5" fill="#fff"/></svg>
<svg class="ic" style="left:359px;top:164px" width="17" height="14" viewBox="0 0 17 14"><path d="M0.5 0.6 L2.6 2.2" stroke="#3d6ba6" stroke-width="1.3" fill="none"/><path d="M2.8 2.7 L16.2 2.9 L13 8 L4 8 Z" fill="#3d6ba6" stroke="#3d6ba6" stroke-width="1"/><rect x="4.55" y="3.5999999999999996" width="1.5" height="1.4" fill="#fff"/><rect x="6.55" y="3.5999999999999996" width="1.5" height="1.4" fill="#fff"/><rect x="8.55" y="3.5999999999999996" width="1.5" height="1.4" fill="#fff"/><rect x="10.55" y="3.5999999999999996" width="1.5" height="1.4" fill="#fff"/><rect x="12.55" y="3.5999999999999996" width="1.5" height="1.4" fill="#fff"/><rect x="4.55" y="5.8" width="1.5" height="1.4" fill="#fff"/><rect x="6.55" y="5.8" width="1.5" height="1.4" fill="#fff"/><rect x="8.55" y="5.8" width="1.5" height="1.4" fill="#fff"/><rect x="10.55" y="5.8" width="1.5" height="1.4" fill="#fff"/><rect x="12.55" y="5.8" width="1.5" height="1.4" fill="#fff"/><path d="M4 8 V10.8 H15.2" stroke="#3d6ba6" stroke-width="1.2" fill="none"/><rect x="4.3" y="11.5" width="2.2" height="1.8" fill="#3d6ba6"/><rect x="12.6" y="11.5" width="2.2" height="1.8" fill="#3d6ba6"/></svg>
<svg class="ic" style="left:378px;top:164px" width="14" height="14" viewBox="0 0 14 14"><defs><radialGradient id="g378164" cx="0.45" cy="0.4" r="0.6"><stop offset="0" stop-color="#ffffff"/><stop offset="0.55" stop-color="#dde9f3"/><stop offset="0.8" stop-color="#b8d1e8"/><stop offset="1" stop-color="#93b9dc"/></radialGradient></defs><circle cx="7" cy="7" r="7" fill="url(#g378164)"/><rect x="6.1" y="3.2" width="1.9" height="1.8" fill="#2b5f9a"/><rect x="6.1" y="6" width="1.9" height="4.8" fill="#2b5f9a"/></svg>
<div class="row" style="top:182px;background:#fff;border-bottom-color:#eeeeee"></div>
<div class="vs" style="left:435px;top:182px;height:20px;background:#eeeeee"></div>
<div class="vs" style="left:500px;top:182px;height:20px;background:#eeeeee"></div>
<div class="vs" style="left:535px;top:182px;height:20px;background:#eeeeee"></div>
<div class="vs" style="left:608px;top:182px;height:20px;background:#eeeeee"></div>
<div class="vs" style="left:643px;top:182px;height:20px;background:#eeeeee"></div>
<div class="vs" style="left:727px;top:182px;height:20px;background:#eeeeee"></div>
<div class="vs" style="left:850px;top:182px;height:20px;background:#eeeeee"></div>
<div class="vs" style="left:902px;top:182px;height:20px;background:#eeeeee"></div>
<div class="vs" style="left:944px;top:182px;height:20px;background:#eeeeee"></div>
<div class="c" style="left:503.6px;top:182px;color:#000">9</div>
<div class="c" style="left:538.6px;top:182px;color:#000">036800008</div>
<div class="c" style="left:611.6px;top:182px;color:#000">1</div>
<div class="c" style="left:646.6px;top:182px;color:#000">036800008</div>
<div class="c d" style="left:731px;top:182px;color:#000">SNAP RING</div>
<svg class="ic" style="left:343.7px;top:185.6px" width="10.4" height="10.4" viewBox="0 0 11 11"><g fill="#84b936" transform="rotate(22.5 5.5 5.5)"><circle cx="5.5" cy="5.5" r="4"/><rect x="4.3" y="0" width="2.4" height="11" rx="0.6"/><rect x="0" y="4.3" width="11" height="2.4" rx="0.6"/><rect x="4.3" y="0" width="2.4" height="11" rx="0.6" transform="rotate(45 5.5 5.5)"/><rect x="4.3" y="0" width="2.4" height="11" rx="0.6" transform="rotate(-45 5.5 5.5)"/></g><circle cx="5.5" cy="5.5" r="2.1" fill="#b5db7a"/><circle cx="5.5" cy="5.5" r="1.5" fill="#fff"/></svg>
<svg class="ic" style="left:359px;top:184px" width="17" height="14" viewBox="0 0 17 14"><path d="M0.5 0.6 L2.6 2.2" stroke="#3d6ba6" stroke-width="1.3" fill="none"/><path d="M2.8 2.7 L16.2 2.9 L13 8 L4 8 Z" fill="#3d6ba6" stroke="#3d6ba6" stroke-width="1"/><rect x="4.55" y="3.5999999999999996" width="1.5" height="1.4" fill="#fff"/><rect x="6.55" y="3.5999999999999996" width="1.5" height="1.4" fill="#fff"/><rect x="8.55" y="3.5999999999999996" width="1.5" height="1.4" fill="#fff"/><rect x="10.55" y="3.5999999999999996" width="1.5" height="1.4" fill="#fff"/><rect x="12.55" y="3.5999999999999996" width="1.5" height="1.4" fill="#fff"/><rect x="4.55" y="5.8" width="1.5" height="1.4" fill="#fff"/><rect x="6.55" y="5.8" width="1.5" height="1.4" fill="#fff"/><rect x="8.55" y="5.8" width="1.5" height="1.4" fill="#fff"/><rect x="10.55" y="5.8" width="1.5" height="1.4" fill="#fff"/><rect x="12.55" y="5.8" width="1.5" height="1.4" fill="#fff"/><path d="M4 8 V10.8 H15.2" stroke="#3d6ba6" stroke-width="1.2" fill="none"/><rect x="4.3" y="11.5" width="2.2" height="1.8" fill="#3d6ba6"/><rect x="12.6" y="11.5" width="2.2" height="1.8" fill="#3d6ba6"/></svg>
<svg class="ic" style="left:378px;top:184px" width="14" height="14" viewBox="0 0 14 14"><defs><radialGradient id="g378184" cx="0.45" cy="0.4" r="0.6"><stop offset="0" stop-color="#ffffff"/><stop offset="0.55" stop-color="#dde9f3"/><stop offset="0.8" stop-color="#b8d1e8"/><stop offset="1" stop-color="#93b9dc"/></radialGradient></defs><circle cx="7" cy="7" r="7" fill="url(#g378184)"/><rect x="6.1" y="3.2" width="1.9" height="1.8" fill="#2b5f9a"/><rect x="6.1" y="6" width="1.9" height="4.8" fill="#2b5f9a"/></svg>
<div class="row" style="top:202px;background:#fff;border-bottom-color:#eeeeee"></div>
<div class="vs" style="left:435px;top:202px;height:20px;background:#eeeeee"></div>
<div class="vs" style="left:500px;top:202px;height:20px;background:#eeeeee"></div>
<div class="vs" style="left:535px;top:202px;height:20px;background:#eeeeee"></div>
<div class="vs" style="left:608px;top:202px;height:20px;background:#eeeeee"></div>
<div class="vs" style="left:643px;top:202px;height:20px;background:#eeeeee"></div>
<div class="vs" style="left:727px;top:202px;height:20px;background:#eeeeee"></div>
<div class="vs" style="left:850px;top:202px;height:20px;background:#eeeeee"></div>
<div class="vs" style="left:902px;top:202px;height:20px;background:#eeeeee"></div>
<div class="vs" style="left:944px;top:202px;height:20px;background:#eeeeee"></div>
<div class="c" style="left:503.6px;top:202px;color:#000">10</div>
<div class="c" style="left:538.6px;top:202px;color:#000">125416300</div>
<div class="c" style="left:611.6px;top:202px;color:#000">1</div>
<div class="c" style="left:646.6px;top:202px;color:#000">125416300</div>
<div class="c d" style="left:731px;top:202px;color:#000">LEVER</div>
<svg class="ic" style="left:343.7px;top:205.6px" width="10.4" height="10.4" viewBox="0 0 11 11"><g fill="#84b936" transform="rotate(22.5 5.5 5.5)"><circle cx="5.5" cy="5.5" r="4"/><rect x="4.3" y="0" width="2.4" height="11" rx="0.6"/><rect x="0" y="4.3" width="11" height="2.4" rx="0.6"/><rect x="4.3" y="0" width="2.4" height="11" rx="0.6" transform="rotate(45 5.5 5.5)"/><rect x="4.3" y="0" width="2.4" height="11" rx="0.6" transform="rotate(-45 5.5 5.5)"/></g><circle cx="5.5" cy="5.5" r="2.1" fill="#b5db7a"/><circle cx="5.5" cy="5.5" r="1.5" fill="#fff"/></svg>
<svg class="ic" style="left:359px;top:204px" width="17" height="14" viewBox="0 0 17 14"><path d="M0.5 0.6 L2.6 2.2" stroke="#3d6ba6" stroke-width="1.3" fill="none"/><path d="M2.8 2.7 L16.2 2.9 L13 8 L4 8 Z" fill="#3d6ba6" stroke="#3d6ba6" stroke-width="1"/><rect x="4.55" y="3.5999999999999996" width="1.5" height="1.4" fill="#fff"/><rect x="6.55" y="3.5999999999999996" width="1.5" height="1.4" fill="#fff"/><rect x="8.55" y="3.5999999999999996" width="1.5" height="1.4" fill="#fff"/><rect x="10.55" y="3.5999999999999996" width="1.5" height="1.4" fill="#fff"/><rect x="12.55" y="3.5999999999999996" width="1.5" height="1.4" fill="#fff"/><rect x="4.55" y="5.8" width="1.5" height="1.4" fill="#fff"/><rect x="6.55" y="5.8" width="1.5" height="1.4" fill="#fff"/><rect x="8.55" y="5.8" width="1.5" height="1.4" fill="#fff"/><rect x="10.55" y="5.8" width="1.5" height="1.4" fill="#fff"/><rect x="12.55" y="5.8" width="1.5" height="1.4" fill="#fff"/><path d="M4 8 V10.8 H15.2" stroke="#3d6ba6" stroke-width="1.2" fill="none"/><rect x="4.3" y="11.5" width="2.2" height="1.8" fill="#3d6ba6"/><rect x="12.6" y="11.5" width="2.2" height="1.8" fill="#3d6ba6"/></svg>
<svg class="ic" style="left:378px;top:204px" width="14" height="14" viewBox="0 0 14 14"><defs><radialGradient id="g378204" cx="0.45" cy="0.4" r="0.6"><stop offset="0" stop-color="#ffffff"/><stop offset="0.55" stop-color="#dde9f3"/><stop offset="0.8" stop-color="#b8d1e8"/><stop offset="1" stop-color="#93b9dc"/></radialGradient></defs><circle cx="7" cy="7" r="7" fill="url(#g378204)"/><rect x="6.1" y="3.2" width="1.9" height="1.8" fill="#2b5f9a"/><rect x="6.1" y="6" width="1.9" height="4.8" fill="#2b5f9a"/></svg>
<div class="row" style="top:222px;background:#fff;border-bottom-color:#eeeeee"></div>
<div class="vs" style="left:435px;top:222px;height:20px;background:#eeeeee"></div>
<div class="vs" style="left:500px;top:222px;height:20px;background:#eeeeee"></div>
<div class="vs" style="left:535px;top:222px;height:20px;background:#eeeeee"></div>
<div class="vs" style="left:608px;top:222px;height:20px;background:#eeeeee"></div>
<div class="vs" style="left:643px;top:222px;height:20px;background:#eeeeee"></div>
<div class="vs" style="left:727px;top:222px;height:20px;background:#eeeeee"></div>
<div class="vs" style="left:850px;top:222px;height:20px;background:#eeeeee"></div>
<div class="vs" style="left:902px;top:222px;height:20px;background:#eeeeee"></div>
<div class="vs" style="left:944px;top:222px;height:20px;background:#eeeeee"></div>
<div class="c" style="left:503.6px;top:222px;color:#000">11</div>
<div class="c" style="left:538.6px;top:222px;color:#000">010110630</div>
<div class="c" style="left:611.6px;top:222px;color:#000">1</div>
<div class="c" style="left:646.6px;top:222px;color:#000">010110630</div>
<div class="c d" style="left:731px;top:222px;color:#000">SCREW</div>
<svg class="ic" style="left:343.7px;top:225.6px" width="10.4" height="10.4" viewBox="0 0 11 11"><g fill="#84b936" transform="rotate(22.5 5.5 5.5)"><circle cx="5.5" cy="5.5" r="4"/><rect x="4.3" y="0" width="2.4" height="11" rx="0.6"/><rect x="0" y="4.3" width="11" height="2.4" rx="0.6"/><rect x="4.3" y="0" width="2.4" height="11" rx="0.6" transform="rotate(45 5.5 5.5)"/><rect x="4.3" y="0" width="2.4" height="11" rx="0.6" transform="rotate(-45 5.5 5.5)"/></g><circle cx="5.5" cy="5.5" r="2.1" fill="#b5db7a"/><circle cx="5.5" cy="5.5" r="1.5" fill="#fff"/></svg>
<svg class="ic" style="left:359px;top:224px" width="17" height="14" viewBox="0 0 17 14"><path d="M0.5 0.6 L2.6 2.2" stroke="#3d6ba6" stroke-width="1.3" fill="none"/><path d="M2.8 2.7 L16.2 2.9 L13 8 L4 8 Z" fill="#3d6ba6" stroke="#3d6ba6" stroke-width="1"/><rect x="4.55" y="3.5999999999999996" width="1.5" height="1.4" fill="#fff"/><rect x="6.55" y="3.5999999999999996" width="1.5" height="1.4" fill="#fff"/><rect x="8.55" y="3.5999999999999996" width="1.5" height="1.4" fill="#fff"/><rect x="10.55" y="3.5999999999999996" width="1.5" height="1.4" fill="#fff"/><rect x="12.55" y="3.5999999999999996" width="1.5" height="1.4" fill="#fff"/><rect x="4.55" y="5.8" width="1.5" height="1.4" fill="#fff"/><rect x="6.55" y="5.8" width="1.5" height="1.4" fill="#fff"/><rect x="8.55" y="5.8" width="1.5" height="1.4" fill="#fff"/><rect x="10.55" y="5.8" width="1.5" height="1.4" fill="#fff"/><rect x="12.55" y="5.8" width="1.5" height="1.4" fill="#fff"/><path d="M4 8 V10.8 H15.2" stroke="#3d6ba6" stroke-width="1.2" fill="none"/><rect x="4.3" y="11.5" width="2.2" height="1.8" fill="#3d6ba6"/><rect x="12.6" y="11.5" width="2.2" height="1.8" fill="#3d6ba6"/></svg>
<svg class="ic" style="left:378px;top:224px" width="14" height="14" viewBox="0 0 14 14"><defs><radialGradient id="g378224" cx="0.45" cy="0.4" r="0.6"><stop offset="0" stop-color="#ffffff"/><stop offset="0.55" stop-color="#dde9f3"/><stop offset="0.8" stop-color="#b8d1e8"/><stop offset="1" stop-color="#93b9dc"/></radialGradient></defs><circle cx="7" cy="7" r="7" fill="url(#g378224)"/><rect x="6.1" y="3.2" width="1.9" height="1.8" fill="#2b5f9a"/><rect x="6.1" y="6" width="1.9" height="4.8" fill="#2b5f9a"/></svg>
<div class="row" style="top:242px;background:#fff;border-bottom-color:#eeeeee"></div>
<div class="vs" style="left:435px;top:242px;height:20px;background:#eeeeee"></div>
<div class="vs" style="left:500px;top:242px;height:20px;background:#eeeeee"></div>
<div class="vs" style="left:535px;top:242px;height:20px;background:#eeeeee"></div>
<div class="vs" style="left:608px;top:242px;height:20px;background:#eeeeee"></div>
<div class="vs" style="left:643px;top:242px;height:20px;background:#eeeeee"></div>
<div class="vs" style="left:727px;top:242px;height:20px;background:#eeeeee"></div>
<div class="vs" style="left:850px;top:242px;height:20px;background:#eeeeee"></div>
<div class="vs" style="left:902px;top:242px;height:20px;background:#eeeeee"></div>
<div class="vs" style="left:944px;top:242px;height:20px;background:#eeeeee"></div>
<div class="c" style="left:503.6px;top:242px;color:#000">12</div>
<div class="c" style="left:538.6px;top:242px;color:#000">023100006</div>
<div class="c" style="left:611.6px;top:242px;color:#000">1</div>
<div class="c" style="left:646.6px;top:242px;color:#000">023100006</div>
<div class="c d" style="left:731px;top:242px;color:#000">NUT</div>
<svg class="ic" style="left:343.7px;top:245.6px" width="10.4" height="10.4" viewBox="0 0 11 11"><g fill="#84b936" transform="rotate(22.5 5.5 5.5)"><circle cx="5.5" cy="5.5" r="4"/><rect x="4.3" y="0" width="2.4" height="11" rx="0.6"/><rect x="0" y="4.3" width="11" height="2.4" rx="0.6"/><rect x="4.3" y="0" width="2.4" height="11" rx="0.6" transform="rotate(45 5.5 5.5)"/><rect x="4.3" y="0" width="2.4" height="11" rx="0.6" transform="rotate(-45 5.5 5.5)"/></g><circle cx="5.5" cy="5.5" r="2.1" fill="#b5db7a"/><circle cx="5.5" cy="5.5" r="1.5" fill="#fff"/></svg>
<svg class="ic" style="left:359px;top:244px" width="17" height="14" viewBox="0 0 17 14"><path d="M0.5 0.6 L2.6 2.2" stroke="#3d6ba6" stroke-width="1.3" fill="none"/><path d="M2.8 2.7 L16.2 2.9 L13 8 L4 8 Z" fill="#3d6ba6" stroke="#3d6ba6" stroke-width="1"/><rect x="4.55" y="3.5999999999999996" width="1.5" height="1.4" fill="#fff"/><rect x="6.55" y="3.5999999999999996" width="1.5" height="1.4" fill="#fff"/><rect x="8.55" y="3.5999999999999996" width="1.5" height="1.4" fill="#fff"/><rect x="10.55" y="3.5999999999999996" width="1.5" height="1.4" fill="#fff"/><rect x="12.55" y="3.5999999999999996" width="1.5" height="1.4" fill="#fff"/><rect x="4.55" y="5.8" width="1.5" height="1.4" fill="#fff"/><rect x="6.55" y="5.8" width="1.5" height="1.4" fill="#fff"/><rect x="8.55" y="5.8" width="1.5" height="1.4" fill="#fff"/><rect x="10.55" y="5.8" width="1.5" height="1.4" fill="#fff"/><rect x="12.55" y="5.8" width="1.5" height="1.4" fill="#fff"/><path d="M4 8 V10.8 H15.2" stroke="#3d6ba6" stroke-width="1.2" fill="none"/><rect x="4.3" y="11.5" width="2.2" height="1.8" fill="#3d6ba6"/><rect x="12.6" y="11.5" width="2.2" height="1.8" fill="#3d6ba6"/></svg>
<svg class="ic" style="left:378px;top:244px" width="14" height="14" viewBox="0 0 14 14"><defs><radialGradient id="g378244" cx="0.45" cy="0.4" r="0.6"><stop offset="0" stop-color="#ffffff"/><stop offset="0.55" stop-color="#dde9f3"/><stop offset="0.8" stop-color="#b8d1e8"/><stop offset="1" stop-color="#93b9dc"/></radialGradient></defs><circle cx="7" cy="7" r="7" fill="url(#g378244)"/><rect x="6.1" y="3.2" width="1.9" height="1.8" fill="#2b5f9a"/><rect x="6.1" y="6" width="1.9" height="4.8" fill="#2b5f9a"/></svg>
<div class="row" style="top:262px;background:#fff;border-bottom-color:#eeeeee"></div>
<div class="vs" style="left:435px;top:262px;height:20px;background:#eeeeee"></div>
<div class="vs" style="left:500px;top:262px;height:20px;background:#eeeeee"></div>
<div class="vs" style="left:535px;top:262px;height:20px;background:#eeeeee"></div>
<div class="vs" style="left:608px;top:262px;height:20px;background:#eeeeee"></div>
<div class="vs" style="left:643px;top:262px;height:20px;background:#eeeeee"></div>
<div class="vs" style="left:727px;top:262px;height:20px;background:#eeeeee"></div>
<div class="vs" style="left:850px;top:262px;height:20px;background:#eeeeee"></div>
<div class="vs" style="left:902px;top:262px;height:20px;background:#eeeeee"></div>
<div class="vs" style="left:944px;top:262px;height:20px;background:#eeeeee"></div>
<div class="c" style="left:503.6px;top:262px;color:#000">13</div>
<div class="c" style="left:538.6px;top:262px;color:#000">125116141</div>
<div class="c" style="left:611.6px;top:262px;color:#000">1</div>
<div class="c" style="left:646.6px;top:262px;color:#000">125116141</div>
<div class="c d" style="left:731px;top:262px;color:#000">SHAFT</div>
<svg class="ic" style="left:343.7px;top:265.6px" width="10.4" height="10.4" viewBox="0 0 11 11"><g fill="#84b936" transform="rotate(22.5 5.5 5.5)"><circle cx="5.5" cy="5.5" r="4"/><rect x="4.3" y="0" width="2.4" height="11" rx="0.6"/><rect x="0" y="4.3" width="11" height="2.4" rx="0.6"/><rect x="4.3" y="0" width="2.4" height="11" rx="0.6" transform="rotate(45 5.5 5.5)"/><rect x="4.3" y="0" width="2.4" height="11" rx="0.6" transform="rotate(-45 5.5 5.5)"/></g><circle cx="5.5" cy="5.5" r="2.1" fill="#b5db7a"/><circle cx="5.5" cy="5.5" r="1.5" fill="#fff"/></svg>
<svg class="ic" style="left:359px;top:264px" width="17" height="14" viewBox="0 0 17 14"><path d="M0.5 0.6 L2.6 2.2" stroke="#3d6ba6" stroke-width="1.3" fill="none"/><path d="M2.8 2.7 L16.2 2.9 L13 8 L4 8 Z" fill="#3d6ba6" stroke="#3d6ba6" stroke-width="1"/><rect x="4.55" y="3.5999999999999996" width="1.5" height="1.4" fill="#fff"/><rect x="6.55" y="3.5999999999999996" width="1.5" height="1.4" fill="#fff"/><rect x="8.55" y="3.5999999999999996" width="1.5" height="1.4" fill="#fff"/><rect x="10.55" y="3.5999999999999996" width="1.5" height="1.4" fill="#fff"/><rect x="12.55" y="3.5999999999999996" width="1.5" height="1.4" fill="#fff"/><rect x="4.55" y="5.8" width="1.5" height="1.4" fill="#fff"/><rect x="6.55" y="5.8" width="1.5" height="1.4" fill="#fff"/><rect x="8.55" y="5.8" width="1.5" height="1.4" fill="#fff"/><rect x="10.55" y="5.8" width="1.5" height="1.4" fill="#fff"/><rect x="12.55" y="5.8" width="1.5" height="1.4" fill="#fff"/><path d="M4 8 V10.8 H15.2" stroke="#3d6ba6" stroke-width="1.2" fill="none"/><rect x="4.3" y="11.5" width="2.2" height="1.8" fill="#3d6ba6"/><rect x="12.6" y="11.5" width="2.2" height="1.8" fill="#3d6ba6"/></svg>
<svg class="ic" style="left:378px;top:264px" width="14" height="14" viewBox="0 0 14 14"><defs><radialGradient id="g378264" cx="0.45" cy="0.4" r="0.6"><stop offset="0" stop-color="#ffffff"/><stop offset="0.55" stop-color="#dde9f3"/><stop offset="0.8" stop-color="#b8d1e8"/><stop offset="1" stop-color="#93b9dc"/></radialGradient></defs><circle cx="7" cy="7" r="7" fill="url(#g378264)"/><rect x="6.1" y="3.2" width="1.9" height="1.8" fill="#2b5f9a"/><rect x="6.1" y="6" width="1.9" height="4.8" fill="#2b5f9a"/></svg>
<div class="row" style="top:282px;background:#fff;border-bottom-color:#eeeeee"></div>
<div class="vs" style="left:435px;top:282px;height:20px;background:#eeeeee"></div>
<div class="vs" style="left:500px;top:282px;height:20px;background:#eeeeee"></div>
<div class="vs" style="left:535px;top:282px;height:20px;background:#eeeeee"></div>
<div class="vs" style="left:608px;top:282px;height:20px;background:#eeeeee"></div>
<div class="vs" style="left:643px;top:282px;height:20px;background:#eeeeee"></div>
<div class="vs" style="left:727px;top:282px;height:20px;background:#eeeeee"></div>
<div class="vs" style="left:850px;top:282px;height:20px;background:#eeeeee"></div>
<div class="vs" style="left:902px;top:282px;height:20px;background:#eeeeee"></div>
<div class="vs" style="left:944px;top:282px;height:20px;background:#eeeeee"></div>
<div class="c" style="left:503.6px;top:282px;color:#000">14</div>
<div class="c" style="left:538.6px;top:282px;color:#000">052100030</div>
<div class="c" style="left:611.6px;top:282px;color:#000">2</div>
<div class="c" style="left:646.6px;top:282px;color:#000">052100030</div>
<div class="c d" style="left:731px;top:282px;color:#000">SEAL - O RING</div>
<svg class="ic" style="left:343.7px;top:285.6px" width="10.4" height="10.4" viewBox="0 0 11 11"><g fill="#84b936" transform="rotate(22.5 5.5 5.5)"><circle cx="5.5" cy="5.5" r="4"/><rect x="4.3" y="0" width="2.4" height="11" rx="0.6"/><rect x="0" y="4.3" width="11" height="2.4" rx="0.6"/><rect x="4.3" y="0" width="2.4" height="11" rx="0.6" transform="rotate(45 5.5 5.5)"/><rect x="4.3" y="0" width="2.4" height="11" rx="0.6" transform="rotate(-45 5.5 5.5)"/></g><circle cx="5.5" cy="5.5" r="2.1" fill="#b5db7a"/><circle cx="5.5" cy="5.5" r="1.5" fill="#fff"/></svg>
<svg class="ic" style="left:359px;top:284px" width="17" height="14" viewBox="0 0 17 14"><path d="M0.5 0.6 L2.6 2.2" stroke="#3d6ba6" stroke-width="1.3" fill="none"/><path d="M2.8 2.7 L16.2 2.9 L13 8 L4 8 Z" fill="#3d6ba6" stroke="#3d6ba6" stroke-width="1"/><rect x="4.55" y="3.5999999999999996" width="1.5" height="1.4" fill="#fff"/><rect x="6.55" y="3.5999999999999996" width="1.5" height="1.4" fill="#fff"/><rect x="8.55" y="3.5999999999999996" width="1.5" height="1.4" fill="#fff"/><rect x="10.55" y="3.5999999999999996" width="1.5" height="1.4" fill="#fff"/><rect x="12.55" y="3.5999999999999996" width="1.5" height="1.4" fill="#fff"/><rect x="4.55" y="5.8" width="1.5" height="1.4" fill="#fff"/><rect x="6.55" y="5.8" width="1.5" height="1.4" fill="#fff"/><rect x="8.55" y="5.8" width="1.5" height="1.4" fill="#fff"/><rect x="10.55" y="5.8" width="1.5" height="1.4" fill="#fff"/><rect x="12.55" y="5.8" width="1.5" height="1.4" fill="#fff"/><path d="M4 8 V10.8 H15.2" stroke="#3d6ba6" stroke-width="1.2" fill="none"/><rect x="4.3" y="11.5" width="2.2" height="1.8" fill="#3d6ba6"/><rect x="12.6" y="11.5" width="2.2" height="1.8" fill="#3d6ba6"/></svg>
<svg class="ic" style="left:378px;top:284px" width="14" height="14" viewBox="0 0 14 14"><defs><radialGradient id="g378284" cx="0.45" cy="0.4" r="0.6"><stop offset="0" stop-color="#ffffff"/><stop offset="0.55" stop-color="#dde9f3"/><stop offset="0.8" stop-color="#b8d1e8"/><stop offset="1" stop-color="#93b9dc"/></radialGradient></defs><circle cx="7" cy="7" r="7" fill="url(#g378284)"/><rect x="6.1" y="3.2" width="1.9" height="1.8" fill="#2b5f9a"/><rect x="6.1" y="6" width="1.9" height="4.8" fill="#2b5f9a"/></svg>
<div class="row" style="top:302px;background:#fff;border-bottom-color:#eeeeee"></div>
<div class="vs" style="left:435px;top:302px;height:20px;background:#eeeeee"></div>
<div class="vs" style="left:500px;top:302px;height:20px;background:#eeeeee"></div>
<div class="vs" style="left:535px;top:302px;height:20px;background:#eeeeee"></div>
<div class="vs" style="left:608px;top:302px;height:20px;background:#eeeeee"></div>
<div class="vs" style="left:643px;top:302px;height:20px;background:#eeeeee"></div>
<div class="vs" style="left:727px;top:302px;height:20px;background:#eeeeee"></div>
<div class="vs" style="left:850px;top:302px;height:20px;background:#eeeeee"></div>
<div class="vs" style="left:902px;top:302px;height:20px;background:#eeeeee"></div>
<div class="vs" style="left:944px;top:302px;height:20px;background:#eeeeee"></div>
<div class="c" style="left:503.6px;top:302px;color:#000">15</div>
<div class="c" style="left:538.6px;top:302px;color:#000">036800005</div>
<div class="c" style="left:611.6px;top:302px;color:#000">1</div>
<div class="c" style="left:646.6px;top:302px;color:#000">036800005</div>
<div class="c d" style="left:731px;top:302px;color:#000">CIRCLIP</div>
<svg class="ic" style="left:343.7px;top:305.6px" width="10.4" height="10.4" viewBox="0 0 11 11"><g fill="#84b936" transform="rotate(22.5 5.5 5.5)"><circle cx="5.5" cy="5.5" r="4"/><rect x="4.3" y="0" width="2.4" height="11" rx="0.6"/><rect x="0" y="4.3" width="11" height="2.4" rx="0.6"/><rect x="4.3" y="0" width="2.4" height="11" rx="0.6" transform="rotate(45 5.5 5.5)"/><rect x="4.3" y="0" width="2.4" height="11" rx="0.6" transform="rotate(-45 5.5 5.5)"/></g><circle cx="5.5" cy="5.5" r="2.1" fill="#b5db7a"/><circle cx="5.5" cy="5.5" r="1.5" fill="#fff"/></svg>
<svg class="ic" style="left:359px;top:304px" width="17" height="14" viewBox="0 0 17 14"><path d="M0.5 0.6 L2.6 2.2" stroke="#3d6ba6" stroke-width="1.3" fill="none"/><path d="M2.8 2.7 L16.2 2.9 L13 8 L4 8 Z" fill="#3d6ba6" stroke="#3d6ba6" stroke-width="1"/><rect x="4.55" y="3.5999999999999996" width="1.5" height="1.4" fill="#fff"/><rect x="6.55" y="3.5999999999999996" width="1.5" height="1.4" fill="#fff"/><rect x="8.55" y="3.5999999999999996" width="1.5" height="1.4" fill="#fff"/><rect x="10.55" y="3.5999999999999996" width="1.5" height="1.4" fill="#fff"/><rect x="12.55" y="3.5999999999999996" width="1.5" height="1.4" fill="#fff"/><rect x="4.55" y="5.8" width="1.5" height="1.4" fill="#fff"/><rect x="6.55" y="5.8" width="1.5" height="1.4" fill="#fff"/><rect x="8.55" y="5.8" width="1.5" height="1.4" fill="#fff"/><rect x="10.55" y="5.8" width="1.5" height="1.4" fill="#fff"/><rect x="12.55" y="5.8" width="1.5" height="1.4" fill="#fff"/><path d="M4 8 V10.8 H15.2" stroke="#3d6ba6" stroke-width="1.2" fill="none"/><rect x="4.3" y="11.5" width="2.2" height="1.8" fill="#3d6ba6"/><rect x="12.6" y="11.5" width="2.2" height="1.8" fill="#3d6ba6"/></svg>
<svg class="ic" style="left:378px;top:304px" width="14" height="14" viewBox="0 0 14 14"><defs><radialGradient id="g378304" cx="0.45" cy="0.4" r="0.6"><stop offset="0" stop-color="#ffffff"/><stop offset="0.55" stop-color="#dde9f3"/><stop offset="0.8" stop-color="#b8d1e8"/><stop offset="1" stop-color="#93b9dc"/></radialGradient></defs><circle cx="7" cy="7" r="7" fill="url(#g378304)"/><rect x="6.1" y="3.2" width="1.9" height="1.8" fill="#2b5f9a"/><rect x="6.1" y="6" width="1.9" height="4.8" fill="#2b5f9a"/></svg>
<div class="row" style="top:322px;background:#fff;border-bottom-color:#eeeeee"></div>
<div class="vs" style="left:435px;top:322px;height:20px;background:#eeeeee"></div>
<div class="vs" style="left:500px;top:322px;height:20px;background:#eeeeee"></div>
<div class="vs" style="left:535px;top:322px;height:20px;background:#eeeeee"></div>
<div class="vs" style="left:608px;top:322px;height:20px;background:#eeeeee"></div>
<div class="vs" style="left:643px;top:322px;height:20px;background:#eeeeee"></div>
<div class="vs" style="left:727px;top:322px;height:20px;background:#eeeeee"></div>
<div class="vs" style="left:850px;top:322px;height:20px;background:#eeeeee"></div>
<div class="vs" style="left:902px;top:322px;height:20px;background:#eeeeee"></div>
<div class="vs" style="left:944px;top:322px;height:20px;background:#eeeeee"></div>
<div class="c" style="left:503.6px;top:322px;color:#000">16</div>
<div class="c" style="left:538.6px;top:322px;color:#000">125976120</div>
<div class="c" style="left:611.6px;top:322px;color:#000">1</div>
<div class="c" style="left:646.6px;top:322px;color:#000">125976120</div>
<div class="c d" style="left:731px;top:322px;color:#000">STAY</div>
<svg class="ic" style="left:343.7px;top:325.6px" width="10.4" height="10.4" viewBox="0 0 11 11"><g fill="#84b936" transform="rotate(22.5 5.5 5.5)"><circle cx="5.5" cy="5.5" r="4"/><rect x="4.3" y="0" width="2.4" height="11" rx="0.6"/><rect x="0" y="4.3" width="11" height="2.4" rx="0.6"/><rect x="4.3" y="0" width="2.4" height="11" rx="0.6" transform="rotate(45 5.5 5.5)"/><rect x="4.3" y="0" width="2.4" height="11" rx="0.6" transform="rotate(-45 5.5 5.5)"/></g><circle cx="5.5" cy="5.5" r="2.1" fill="#b5db7a"/><circle cx="5.5" cy="5.5" r="1.5" fill="#fff"/></svg>
<svg class="ic" style="left:359px;top:324px" width="17" height="14" viewBox="0 0 17 14"><path d="M0.5 0.6 L2.6 2.2" stroke="#3d6ba6" stroke-width="1.3" fill="none"/><path d="M2.8 2.7 L16.2 2.9 L13 8 L4 8 Z" fill="#3d6ba6" stroke="#3d6ba6" stroke-width="1"/><rect x="4.55" y="3.5999999999999996" width="1.5" height="1.4" fill="#fff"/><rect x="6.55" y="3.5999999999999996" width="1.5" height="1.4" fill="#fff"/><rect x="8.55" y="3.5999999999999996" width="1.5" height="1.4" fill="#fff"/><rect x="10.55" y="3.5999999999999996" width="1.5" height="1.4" fill="#fff"/><rect x="12.55" y="3.5999999999999996" width="1.5" height="1.4" fill="#fff"/><rect x="4.55" y="5.8" width="1.5" height="1.4" fill="#fff"/><rect x="6.55" y="5.8" width="1.5" height="1.4" fill="#fff"/><rect x="8.55" y="5.8" width="1.5" height="1.4" fill="#fff"/><rect x="10.55" y="5.8" width="1.5" height="1.4" fill="#fff"/><rect x="12.55" y="5.8" width="1.5" height="1.4" fill="#fff"/><path d="M4 8 V10.8 H15.2" stroke="#3d6ba6" stroke-width="1.2" fill="none"/><rect x="4.3" y="11.5" width="2.2" height="1.8" fill="#3d6ba6"/><rect x="12.6" y="11.5" width="2.2" height="1.8" fill="#3d6ba6"/></svg>
<svg class="ic" style="left:378px;top:324px" width="14" height="14" viewBox="0 0 14 14"><defs><radialGradient id="g378324" cx="0.45" cy="0.4" r="0.6"><stop offset="0" stop-color="#ffffff"/><stop offset="0.55" stop-color="#dde9f3"/><stop offset="0.8" stop-color="#b8d1e8"/><stop offset="1" stop-color="#93b9dc"/></radialGradient></defs><circle cx="7" cy="7" r="7" fill="url(#g378324)"/><rect x="6.1" y="3.2" width="1.9" height="1.8" fill="#2b5f9a"/><rect x="6.1" y="6" width="1.9" height="4.8" fill="#2b5f9a"/></svg>
<div class="row" style="top:342px;background:#fff;border-bottom-color:#eeeeee"></div>
<div class="vs" style="left:435px;top:342px;height:20px;background:#eeeeee"></div>
<div class="vs" style="left:500px;top:342px;height:20px;background:#eeeeee"></div>
<div class="vs" style="left:535px;top:342px;height:20px;background:#eeeeee"></div>
<div class="vs" style="left:608px;top:342px;height:20px;background:#eeeeee"></div>
<div class="vs" style="left:643px;top:342px;height:20px;background:#eeeeee"></div>
<div class="vs" style="left:727px;top:342px;height:20px;background:#eeeeee"></div>
<div class="vs" style="left:850px;top:342px;height:20px;background:#eeeeee"></div>
<div class="vs" style="left:902px;top:342px;height:20px;background:#eeeeee"></div>
<div class="vs" style="left:944px;top:342px;height:20px;background:#eeeeee"></div>
<div class="c" style="left:503.6px;top:342px;color:#000">17</div>
<div class="c" style="left:538.6px;top:342px;color:#000">011310616</div>
<div class="c" style="left:611.6px;top:342px;color:#000">2</div>
<div class="c" style="left:646.6px;top:342px;color:#000">011310616</div>
<div class="c d" style="left:731px;top:342px;color:#000">SCREW</div>
<svg class="ic" style="left:343.7px;top:345.6px" width="10.4" height="10.4" viewBox="0 0 11 11"><g fill="#84b936" transform="rotate(22.5 5.5 5.5)"><circle cx="5.5" cy="5.5" r="4"/><rect x="4.3" y="0" width="2.4" height="11" rx="0.6"/><rect x="0" y="4.3" width="11" height="2.4" rx="0.6"/><rect x="4.3" y="0" width="2.4" height="11" rx="0.6" transform="rotate(45 5.5 5.5)"/><rect x="4.3" y="0" width="2.4" height="11" rx="0.6" transform="rotate(-45 5.5 5.5)"/></g><circle cx="5.5" cy="5.5" r="2.1" fill="#b5db7a"/><circle cx="5.5" cy="5.5" r="1.5" fill="#fff"/></svg>
<svg class="ic" style="left:359px;top:344px" width="17" height="14" viewBox="0 0 17 14"><path d="M0.5 0.6 L2.6 2.2" stroke="#3d6ba6" stroke-width="1.3" fill="none"/><path d="M2.8 2.7 L16.2 2.9 L13 8 L4 8 Z" fill="#3d6ba6" stroke="#3d6ba6" stroke-width="1"/><rect x="4.55" y="3.5999999999999996" width="1.5" height="1.4" fill="#fff"/><rect x="6.55" y="3.5999999999999996" width="1.5" height="1.4" fill="#fff"/><rect x="8.55" y="3.5999999999999996" width="1.5" height="1.4" fill="#fff"/><rect x="10.55" y="3.5999999999999996" width="1.5" height="1.4" fill="#fff"/><rect x="12.55" y="3.5999999999999996" width="1.5" height="1.4" fill="#fff"/><rect x="4.55" y="5.8" width="1.5" height="1.4" fill="#fff"/><rect x="6.55" y="5.8" width="1.5" height="1.4" fill="#fff"/><rect x="8.55" y="5.8" width="1.5" height="1.4" fill="#fff"/><rect x="10.55" y="5.8" width="1.5" height="1.4" fill="#fff"/><rect x="12.55" y="5.8" width="1.5" height="1.4" fill="#fff"/><path d="M4 8 V10.8 H15.2" stroke="#3d6ba6" stroke-width="1.2" fill="none"/><rect x="4.3" y="11.5" width="2.2" height="1.8" fill="#3d6ba6"/><rect x="12.6" y="11.5" width="2.2" height="1.8" fill="#3d6ba6"/></svg>
<svg class="ic" style="left:378px;top:344px" width="14" height="14" viewBox="0 0 14 14"><defs><radialGradient id="g378344" cx="0.45" cy="0.4" r="0.6"><stop offset="0" stop-color="#ffffff"/><stop offset="0.55" stop-color="#dde9f3"/><stop offset="0.8" stop-color="#b8d1e8"/><stop offset="1" stop-color="#93b9dc"/></radialGradient></defs><circle cx="7" cy="7" r="7" fill="url(#g378344)"/><rect x="6.1" y="3.2" width="1.9" height="1.8" fill="#2b5f9a"/><rect x="6.1" y="6" width="1.9" height="4.8" fill="#2b5f9a"/></svg>
<div class="row" style="top:362px;background:#fff;border-bottom-color:#eeeeee"></div>
<div class="vs" style="left:435px;top:362px;height:20px;background:#eeeeee"></div>
<div class="vs" style="left:500px;top:362px;height:20px;background:#eeeeee"></div>
<div class="vs" style="left:535px;top:362px;height:20px;background:#eeeeee"></div>
<div class="vs" style="left:608px;top:362px;height:20px;background:#eeeeee"></div>
<div class="vs" style="left:643px;top:362px;height:20px;background:#eeeeee"></div>
<div class="vs" style="left:727px;top:362px;height:20px;background:#eeeeee"></div>
<div class="vs" style="left:850px;top:362px;height:20px;background:#eeeeee"></div>
<div class="vs" style="left:902px;top:362px;height:20px;background:#eeeeee"></div>
<div class="vs" style="left:944px;top:362px;height:20px;background:#eeeeee"></div>
<div class="c" style="left:503.6px;top:362px;color:#000">18</div>
<div class="c" style="left:538.6px;top:362px;color:#000">2318A207</div>
<div class="c" style="left:611.6px;top:362px;color:#000">1</div>
<div class="c" style="left:646.6px;top:362px;color:#000">2318A207</div>
<div class="c d" style="left:731px;top:362px;color:#000">NUT</div>
<svg class="ic" style="left:343.7px;top:365.6px" width="10.4" height="10.4" viewBox="0 0 11 11"><g fill="#84b936" transform="rotate(22.5 5.5 5.5)"><circle cx="5.5" cy="5.5" r="4"/><rect x="4.3" y="0" width="2.4" height="11" rx="0.6"/><rect x="0" y="4.3" width="11" height="2.4" rx="0.6"/><rect x="4.3" y="0" width="2.4" height="11" rx="0.6" transform="rotate(45 5.5 5.5)"/><rect x="4.3" y="0" width="2.4" height="11" rx="0.6" transform="rotate(-45 5.5 5.5)"/></g><circle cx="5.5" cy="5.5" r="2.1" fill="#b5db7a"/><circle cx="5.5" cy="5.5" r="1.5" fill="#fff"/></svg>
<svg class="ic" style="left:359px;top:364px" width="17" height="14" viewBox="0 0 17 14"><path d="M0.5 0.6 L2.6 2.2" stroke="#3d6ba6" stroke-width="1.3" fill="none"/><path d="M2.8 2.7 L16.2 2.9 L13 8 L4 8 Z" fill="#3d6ba6" stroke="#3d6ba6" stroke-width="1"/><rect x="4.55" y="3.5999999999999996" width="1.5" height="1.4" fill="#fff"/><rect x="6.55" y="3.5999999999999996" width="1.5" height="1.4" fill="#fff"/><rect x="8.55" y="3.5999999999999996" width="1.5" height="1.4" fill="#fff"/><rect x="10.55" y="3.5999999999999996" width="1.5" height="1.4" fill="#fff"/><rect x="12.55" y="3.5999999999999996" width="1.5" height="1.4" fill="#fff"/><rect x="4.55" y="5.8" width="1.5" height="1.4" fill="#fff"/><rect x="6.55" y="5.8" width="1.5" height="1.4" fill="#fff"/><rect x="8.55" y="5.8" width="1.5" height="1.4" fill="#fff"/><rect x="10.55" y="5.8" width="1.5" height="1.4" fill="#fff"/><rect x="12.55" y="5.8" width="1.5" height="1.4" fill="#fff"/><path d="M4 8 V10.8 H15.2" stroke="#3d6ba6" stroke-width="1.2" fill="none"/><rect x="4.3" y="11.5" width="2.2" height="1.8" fill="#3d6ba6"/><rect x="12.6" y="11.5" width="2.2" height="1.8" fill="#3d6ba6"/></svg>
<svg class="ic" style="left:378px;top:364px" width="14" height="14" viewBox="0 0 14 14"><defs><radialGradient id="g378364" cx="0.45" cy="0.4" r="0.6"><stop offset="0" stop-color="#ffffff"/><stop offset="0.55" stop-color="#dde9f3"/><stop offset="0.8" stop-color="#b8d1e8"/><stop offset="1" stop-color="#93b9dc"/></radialGradient></defs><circle cx="7" cy="7" r="7" fill="url(#g378364)"/><rect x="6.1" y="3.2" width="1.9" height="1.8" fill="#2b5f9a"/><rect x="6.1" y="6" width="1.9" height="4.8" fill="#2b5f9a"/></svg>
<div class="row" style="top:382px;background:#fff;border-bottom-color:#eeeeee"></div>
<div class="vs" style="left:435px;top:382px;height:20px;background:#eeeeee"></div>
<div class="vs" style="left:500px;top:382px;height:20px;background:#eeeeee"></div>
<div class="vs" style="left:535px;top:382px;height:20px;background:#eeeeee"></div>
<div class="vs" style="left:608px;top:382px;height:20px;background:#eeeeee"></div>
<div class="vs" style="left:643px;top:382px;height:20px;background:#eeeeee"></div>
<div class="vs" style="left:727px;top:382px;height:20px;background:#eeeeee"></div>
<div class="vs" style="left:850px;top:382px;height:20px;background:#eeeeee"></div>
<div class="vs" style="left:902px;top:382px;height:20px;background:#eeeeee"></div>
<div class="vs" style="left:944px;top:382px;height:20px;background:#eeeeee"></div>
<div class="c" style="left:503.6px;top:382px;color:#000">19</div>
<div class="c" style="left:538.6px;top:382px;color:#000">2315C039</div>
<div class="c" style="left:611.6px;top:382px;color:#000">2</div>
<div class="c" style="left:646.6px;top:382px;color:#000">2315C039</div>
<div class="c d" style="left:731px;top:382px;color:#000">SCREW</div>
<svg class="ic" style="left:343.7px;top:385.6px" width="10.4" height="10.4" viewBox="0 0 11 11"><g fill="#84b936" transform="rotate(22.5 5.5 5.5)"><circle cx="5.5" cy="5.5" r="4"/><rect x="4.3" y="0" width="2.4" height="11" rx="0.6"/><rect x="0" y="4.3" width="11" height="2.4" rx="0.6"/><rect x="4.3" y="0" width="2.4" height="11" rx="0.6" transform="rotate(45 5.5 5.5)"/><rect x="4.3" y="0" width="2.4" height="11" rx="0.6" transform="rotate(-45 5.5 5.5)"/></g><circle cx="5.5" cy="5.5" r="2.1" fill="#b5db7a"/><circle cx="5.5" cy="5.5" r="1.5" fill="#fff"/></svg>
<svg class="ic" style="left:359px;top:384px" width="17" height="14" viewBox="0 0 17 14"><path d="M0.5 0.6 L2.6 2.2" stroke="#3d6ba6" stroke-width="1.3" fill="none"/><path d="M2.8 2.7 L16.2 2.9 L13 8 L4 8 Z" fill="#3d6ba6" stroke="#3d6ba6" stroke-width="1"/><rect x="4.55" y="3.5999999999999996" width="1.5" height="1.4" fill="#fff"/><rect x="6.55" y="3.5999999999999996" width="1.5" height="1.4" fill="#fff"/><rect x="8.55" y="3.5999999999999996" width="1.5" height="1.4" fill="#fff"/><rect x="10.55" y="3.5999999999999996" width="1.5" height="1.4" fill="#fff"/><rect x="12.55" y="3.5999999999999996" width="1.5" height="1.4" fill="#fff"/><rect x="4.55" y="5.8" width="1.5" height="1.4" fill="#fff"/><rect x="6.55" y="5.8" width="1.5" height="1.4" fill="#fff"/><rect x="8.55" y="5.8" width="1.5" height="1.4" fill="#fff"/><rect x="10.55" y="5.8" width="1.5" height="1.4" fill="#fff"/><rect x="12.55" y="5.8" width="1.5" height="1.4" fill="#fff"/><path d="M4 8 V10.8 H15.2" stroke="#3d6ba6" stroke-width="1.2" fill="none"/><rect x="4.3" y="11.5" width="2.2" height="1.8" fill="#3d6ba6"/><rect x="12.6" y="11.5" width="2.2" height="1.8" fill="#3d6ba6"/></svg>
<svg class="ic" style="left:378px;top:384px" width="14" height="14" viewBox="0 0 14 14"><defs><radialGradient id="g378384" cx="0.45" cy="0.4" r="0.6"><stop offset="0" stop-color="#ffffff"/><stop offset="0.55" stop-color="#dde9f3"/><stop offset="0.8" stop-color="#b8d1e8"/><stop offset="1" stop-color="#93b9dc"/></radialGradient></defs><circle cx="7" cy="7" r="7" fill="url(#g378384)"/><rect x="6.1" y="3.2" width="1.9" height="1.8" fill="#2b5f9a"/><rect x="6.1" y="6" width="1.9" height="4.8" fill="#2b5f9a"/></svg>
<div class="row" style="top:402px;background:#fff;border-bottom-color:#eeeeee"></div>
<div class="vs" style="left:435px;top:402px;height:20px;background:#eeeeee"></div>
<div class="vs" style="left:500px;top:402px;height:20px;background:#eeeeee"></div>
<div class="vs" style="left:535px;top:402px;height:20px;background:#eeeeee"></div>
<div class="vs" style="left:608px;top:402px;height:20px;background:#eeeeee"></div>
<div class="vs" style="left:643px;top:402px;height:20px;background:#eeeeee"></div>
<div class="vs" style="left:727px;top:402px;height:20px;background:#eeeeee"></div>
<div class="vs" style="left:850px;top:402px;height:20px;background:#eeeeee"></div>
<div class="vs" style="left:902px;top:402px;height:20px;background:#eeeeee"></div>
<div class="vs" style="left:944px;top:402px;height:20px;background:#eeeeee"></div>
<div class="c" style="left:503.6px;top:402px;color:#000">20</div>
<div class="c" style="left:538.6px;top:402px;color:#000">2648A120</div>
<div class="c" style="left:611.6px;top:402px;color:#000">1</div>
<div class="c" style="left:646.6px;top:402px;color:#000">2648A120</div>
<div class="c d" style="left:731px;top:402px;color:#000">NUT</div>
<svg class="ic" style="left:343.7px;top:405.6px" width="10.4" height="10.4" viewBox="0 0 11 11"><g fill="#84b936" transform="rotate(22.5 5.5 5.5)"><circle cx="5.5" cy="5.5" r="4"/><rect x="4.3" y="0" width="2.4" height="11" rx="0.6"/><rect x="0" y="4.3" width="11" height="2.4" rx="0.6"/><rect x="4.3" y="0" width="2.4" height="11" rx="0.6" transform="rotate(45 5.5 5.5)"/><rect x="4.3" y="0" width="2.4" height="11" rx="0.6" transform="rotate(-45 5.5 5.5)"/></g><circle cx="5.5" cy="5.5" r="2.1" fill="#b5db7a"/><circle cx="5.5" cy="5.5" r="1.5" fill="#fff"/></svg>
<svg class="ic" style="left:359px;top:404px" width="17" height="14" viewBox="0 0 17 14"><path d="M0.5 0.6 L2.6 2.2" stroke="#3d6ba6" stroke-width="1.3" fill="none"/><path d="M2.8 2.7 L16.2 2.9 L13 8 L4 8 Z" fill="#3d6ba6" stroke="#3d6ba6" stroke-width="1"/><rect x="4.55" y="3.5999999999999996" width="1.5" height="1.4" fill="#fff"/><rect x="6.55" y="3.5999999999999996" width="1.5" height="1.4" fill="#fff"/><rect x="8.55" y="3.5999999999999996" width="1.5" height="1.4" fill="#fff"/><rect x="10.55" y="3.5999999999999996" width="1.5" height="1.4" fill="#fff"/><rect x="12.55" y="3.5999999999999996" width="1.5" height="1.4" fill="#fff"/><rect x="4.55" y="5.8" width="1.5" height="1.4" fill="#fff"/><rect x="6.55" y="5.8" width="1.5" height="1.4" fill="#fff"/><rect x="8.55" y="5.8" width="1.5" height="1.4" fill="#fff"/><rect x="10.55" y="5.8" width="1.5" height="1.4" fill="#fff"/><rect x="12.55" y="5.8" width="1.5" height="1.4" fill="#fff"/><path d="M4 8 V10.8 H15.2" stroke="#3d6ba6" stroke-width="1.2" fill="none"/><rect x="4.3" y="11.5" width="2.2" height="1.8" fill="#3d6ba6"/><rect x="12.6" y="11.5" width="2.2" height="1.8" fill="#3d6ba6"/></svg>
<svg class="ic" style="left:378px;top:404px" width="14" height="14" viewBox="0 0 14 14"><defs><radialGradient id="g378404" cx="0.45" cy="0.4" r="0.6"><stop offset="0" stop-color="#ffffff"/><stop offset="0.55" stop-color="#dde9f3"/><stop offset="0.8" stop-color="#b8d1e8"/><stop offset="1" stop-color="#93b9dc"/></radialGradient></defs><circle cx="7" cy="7" r="7" fill="url(#g378404)"/><rect x="6.1" y="3.2" width="1.9" height="1.8" fill="#2b5f9a"/><rect x="6.1" y="6" width="1.9" height="4.8" fill="#2b5f9a"/></svg>
<div class="row" style="top:422px;background:#fff;border-bottom-color:#eeeeee"></div>
<div class="vs" style="left:435px;top:422px;height:20px;background:#eeeeee"></div>
<div class="vs" style="left:500px;top:422px;height:20px;background:#eeeeee"></div>
<div class="vs" style="left:535px;top:422px;height:20px;background:#eeeeee"></div>
<div class="vs" style="left:608px;top:422px;height:20px;background:#eeeeee"></div>
<div class="vs" style="left:643px;top:422px;height:20px;background:#eeeeee"></div>
<div class="vs" style="left:727px;top:422px;height:20px;background:#eeeeee"></div>
<div class="vs" style="left:850px;top:422px;height:20px;background:#eeeeee"></div>
<div class="vs" style="left:902px;top:422px;height:20px;background:#eeeeee"></div>
<div class="vs" style="left:944px;top:422px;height:20px;background:#eeeeee"></div>
<div class="c" style="left:503.6px;top:422px;color:#000">21</div>
<div class="c" style="left:538.6px;top:422px;color:#000">198216760</div>
<div class="c" style="left:611.6px;top:422px;color:#000">1</div>
<div class="c" style="left:646.6px;top:422px;color:#000">198216760</div>
<div class="c d" style="left:731px;top:422px;color:#000">STOP SPRING</div>
<svg class="ic" style="left:343.7px;top:425.6px" width="10.4" height="10.4" viewBox="0 0 11 11"><g fill="#84b936" transform="rotate(22.5 5.5 5.5)"><circle cx="5.5" cy="5.5" r="4"/><rect x="4.3" y="0" width="2.4" height="11" rx="0.6"/><rect x="0" y="4.3" width="11" height="2.4" rx="0.6"/><rect x="4.3" y="0" width="2.4" height="11" rx="0.6" transform="rotate(45 5.5 5.5)"/><rect x="4.3" y="0" width="2.4" height="11" rx="0.6" transform="rotate(-45 5.5 5.5)"/></g><circle cx="5.5" cy="5.5" r="2.1" fill="#b5db7a"/><circle cx="5.5" cy="5.5" r="1.5" fill="#fff"/></svg>
<svg class="ic" style="left:359px;top:424px" width="17" height="14" viewBox="0 0 17 14"><path d="M0.5 0.6 L2.6 2.2" stroke="#3d6ba6" stroke-width="1.3" fill="none"/><path d="M2.8 2.7 L16.2 2.9 L13 8 L4 8 Z" fill="#3d6ba6" stroke="#3d6ba6" stroke-width="1"/><rect x="4.55" y="3.5999999999999996" width="1.5" height="1.4" fill="#fff"/><rect x="6.55" y="3.5999999999999996" width="1.5" height="1.4" fill="#fff"/><rect x="8.55" y="3.5999999999999996" width="1.5" height="1.4" fill="#fff"/><rect x="10.55" y="3.5999999999999996" width="1.5" height="1.4" fill="#fff"/><rect x="12.55" y="3.5999999999999996" width="1.5" height="1.4" fill="#fff"/><rect x="4.55" y="5.8" width="1.5" height="1.4" fill="#fff"/><rect x="6.55" y="5.8" width="1.5" height="1.4" fill="#fff"/><rect x="8.55" y="5.8" width="1.5" height="1.4" fill="#fff"/><rect x="10.55" y="5.8" width="1.5" height="1.4" fill="#fff"/><rect x="12.55" y="5.8" width="1.5" height="1.4" fill="#fff"/><path d="M4 8 V10.8 H15.2" stroke="#3d6ba6" stroke-width="1.2" fill="none"/><rect x="4.3" y="11.5" width="2.2" height="1.8" fill="#3d6ba6"/><rect x="12.6" y="11.5" width="2.2" height="1.8" fill="#3d6ba6"/></svg>
<svg class="ic" style="left:378px;top:424px" width="14" height="14" viewBox="0 0 14 14"><defs><radialGradient id="g378424" cx="0.45" cy="0.4" r="0.6"><stop offset="0" stop-color="#ffffff"/><stop offset="0.55" stop-color="#dde9f3"/><stop offset="0.8" stop-color="#b8d1e8"/><stop offset="1" stop-color="#93b9dc"/></radialGradient></defs><circle cx="7" cy="7" r="7" fill="url(#g378424)"/><rect x="6.1" y="3.2" width="1.9" height="1.8" fill="#2b5f9a"/><rect x="6.1" y="6" width="1.9" height="4.8" fill="#2b5f9a"/></svg>
<div class="row" style="top:442px;background:#fff;border-bottom-color:#eeeeee"></div>
<div class="vs" style="left:435px;top:442px;height:20px;background:#eeeeee"></div>
<div class="vs" style="left:500px;top:442px;height:20px;background:#eeeeee"></div>
<div class="vs" style="left:535px;top:442px;height:20px;background:#eeeeee"></div>
<div class="vs" style="left:608px;top:442px;height:20px;background:#eeeeee"></div>
<div class="vs" style="left:643px;top:442px;height:20px;background:#eeeeee"></div>
<div class="vs" style="left:727px;top:442px;height:20px;background:#eeeeee"></div>
<div class="vs" style="left:850px;top:442px;height:20px;background:#eeeeee"></div>
<div class="vs" style="left:902px;top:442px;height:20px;background:#eeeeee"></div>
<div class="vs" style="left:944px;top:442px;height:20px;background:#eeeeee"></div>
<div class="c" style="left:503.6px;top:442px;color:#000">22</div>
<div class="c" style="left:538.6px;top:442px;color:#000">125176150</div>
<div class="c" style="left:611.6px;top:442px;color:#000">1</div>
<div class="c" style="left:646.6px;top:442px;color:#000">125176150</div>
<div class="c d" style="left:731px;top:442px;color:#000">STOP LEVER</div>
<svg class="ic" style="left:343.7px;top:445.6px" width="10.4" height="10.4" viewBox="0 0 11 11"><g fill="#84b936" transform="rotate(22.5 5.5 5.5)"><circle cx="5.5" cy="5.5" r="4"/><rect x="4.3" y="0" width="2.4" height="11" rx="0.6"/><rect x="0" y="4.3" width="11" height="2.4" rx="0.6"/><rect x="4.3" y="0" width="2.4" height="11" rx="0.6" transform="rotate(45 5.5 5.5)"/><rect x="4.3" y="0" width="2.4" height="11" rx="0.6" transform="rotate(-45 5.5 5.5)"/></g><circle cx="5.5" cy="5.5" r="2.1" fill="#b5db7a"/><circle cx="5.5" cy="5.5" r="1.5" fill="#fff"/></svg>
<svg class="ic" style="left:359px;top:444px" width="17" height="14" viewBox="0 0 17 14"><path d="M0.5 0.6 L2.6 2.2" stroke="#3d6ba6" stroke-width="1.3" fill="none"/><path d="M2.8 2.7 L16.2 2.9 L13 8 L4 8 Z" fill="#3d6ba6" stroke="#3d6ba6" stroke-width="1"/><rect x="4.55" y="3.5999999999999996" width="1.5" height="1.4" fill="#fff"/><rect x="6.55" y="3.5999999999999996" width="1.5" height="1.4" fill="#fff"/><rect x="8.55" y="3.5999999999999996" width="1.5" height="1.4" fill="#fff"/><rect x="10.55" y="3.5999999999999996" width="1.5" height="1.4" fill="#fff"/><rect x="12.55" y="3.5999999999999996" width="1.5" height="1.4" fill="#fff"/><rect x="4.55" y="5.8" width="1.5" height="1.4" fill="#fff"/><rect x="6.55" y="5.8" width="1.5" height="1.4" fill="#fff"/><rect x="8.55" y="5.8" width="1.5" height="1.4" fill="#fff"/><rect x="10.55" y="5.8" width="1.5" height="1.4" fill="#fff"/><rect x="12.55" y="5.8" width="1.5" height="1.4" fill="#fff"/><path d="M4 8 V10.8 H15.2" stroke="#3d6ba6" stroke-width="1.2" fill="none"/><rect x="4.3" y="11.5" width="2.2" height="1.8" fill="#3d6ba6"/><rect x="12.6" y="11.5" width="2.2" height="1.8" fill="#3d6ba6"/></svg>
<svg class="ic" style="left:378px;top:444px" width="14" height="14" viewBox="0 0 14 14"><defs><radialGradient id="g378444" cx="0.45" cy="0.4" r="0.6"><stop offset="0" stop-color="#ffffff"/><stop offset="0.55" stop-color="#dde9f3"/><stop offset="0.8" stop-color="#b8d1e8"/><stop offset="1" stop-color="#93b9dc"/></radialGradient></defs><circle cx="7" cy="7" r="7" fill="url(#g378444)"/><rect x="6.1" y="3.2" width="1.9" height="1.8" fill="#2b5f9a"/><rect x="6.1" y="6" width="1.9" height="4.8" fill="#2b5f9a"/></svg>
<div class="row" style="top:462px;background:#fff;border-bottom-color:#eeeeee"></div>
<div class="vs" style="left:435px;top:462px;height:20px;background:#eeeeee"></div>
<div class="vs" style="left:500px;top:462px;height:20px;background:#eeeeee"></div>
<div class="vs" style="left:535px;top:462px;height:20px;background:#eeeeee"></div>
<div class="vs" style="left:608px;top:462px;height:20px;background:#eeeeee"></div>
<div class="vs" style="left:643px;top:462px;height:20px;background:#eeeeee"></div>
<div class="vs" style="left:727px;top:462px;height:20px;background:#eeeeee"></div>
<div class="vs" style="left:850px;top:462px;height:20px;background:#eeeeee"></div>
<div class="vs" style="left:902px;top:462px;height:20px;background:#eeeeee"></div>
<div class="vs" style="left:944px;top:462px;height:20px;background:#eeeeee"></div>
<div class="c" style="left:503.6px;top:462px;color:#000">23</div>
<div class="c" style="left:538.6px;top:462px;color:#000">020700008</div>
<div class="c" style="left:611.6px;top:462px;color:#000">2</div>
<div class="c" style="left:646.6px;top:462px;color:#000">020700008</div>
<div class="c d" style="left:731px;top:462px;color:#000">NUT</div>
<svg class="ic" style="left:343.7px;top:465.6px" width="10.4" height="10.4" viewBox="0 0 11 11"><g fill="#84b936" transform="rotate(22.5 5.5 5.5)"><circle cx="5.5" cy="5.5" r="4"/><rect x="4.3" y="0" width="2.4" height="11" rx="0.6"/><rect x="0" y="4.3" width="11" height="2.4" rx="0.6"/><rect x="4.3" y="0" width="2.4" height="11" rx="0.6" transform="rotate(45 5.5 5.5)"/><rect x="4.3" y="0" width="2.4" height="11" rx="0.6" transform="rotate(-45 5.5 5.5)"/></g><circle cx="5.5" cy="5.5" r="2.1" fill="#b5db7a"/><circle cx="5.5" cy="5.5" r="1.5" fill="#fff"/></svg>
<svg class="ic" style="left:359px;top:464px" width="17" height="14" viewBox="0 0 17 14"><path d="M0.5 0.6 L2.6 2.2" stroke="#3d6ba6" stroke-width="1.3" fill="none"/><path d="M2.8 2.7 L16.2 2.9 L13 8 L4 8 Z" fill="#3d6ba6" stroke="#3d6ba6" stroke-width="1"/><rect x="4.55" y="3.5999999999999996" width="1.5" height="1.4" fill="#fff"/><rect x="6.55" y="3.5999999999999996" width="1.5" height="1.4" fill="#fff"/><rect x="8.55" y="3.5999999999999996" width="1.5" height="1.4" fill="#fff"/><rect x="10.55" y="3.5999999999999996" width="1.5" height="1.4" fill="#fff"/><rect x="12.55" y="3.5999999999999996" width="1.5" height="1.4" fill="#fff"/><rect x="4.55" y="5.8" width="1.5" height="1.4" fill="#fff"/><rect x="6.55" y="5.8" width="1.5" height="1.4" fill="#fff"/><rect x="8.55" y="5.8" width="1.5" height="1.4" fill="#fff"/><rect x="10.55" y="5.8" width="1.5" height="1.4" fill="#fff"/><rect x="12.55" y="5.8" width="1.5" height="1.4" fill="#fff"/><path d="M4 8 V10.8 H15.2" stroke="#3d6ba6" stroke-width="1.2" fill="none"/><rect x="4.3" y="11.5" width="2.2" height="1.8" fill="#3d6ba6"/><rect x="12.6" y="11.5" width="2.2" height="1.8" fill="#3d6ba6"/></svg>
<svg class="ic" style="left:378px;top:464px" width="14" height="14" viewBox="0 0 14 14"><defs><radialGradient id="g378464" cx="0.45" cy="0.4" r="0.6"><stop offset="0" stop-color="#ffffff"/><stop offset="0.55" stop-color="#dde9f3"/><stop offset="0.8" stop-color="#b8d1e8"/><stop offset="1" stop-color="#93b9dc"/></radialGradient></defs><circle cx="7" cy="7" r="7" fill="url(#g378464)"/><rect x="6.1" y="3.2" width="1.9" height="1.8" fill="#2b5f9a"/><rect x="6.1" y="6" width="1.9" height="4.8" fill="#2b5f9a"/></svg>
<div class="row" style="top:482px;background:#fff;border-bottom-color:#eeeeee"></div>
<div class="vs" style="left:435px;top:482px;height:20px;background:#eeeeee"></div>
<div class="vs" style="left:500px;top:482px;height:20px;background:#eeeeee"></div>
<div class="vs" style="left:535px;top:482px;height:20px;background:#eeeeee"></div>
<div class="vs" style="left:608px;top:482px;height:20px;background:#eeeeee"></div>
<div class="vs" style="left:643px;top:482px;height:20px;background:#eeeeee"></div>
<div class="vs" style="left:727px;top:482px;height:20px;background:#eeeeee"></div>
<div class="vs" style="left:850px;top:482px;height:20px;background:#eeeeee"></div>
<div class="vs" style="left:902px;top:482px;height:20px;background:#eeeeee"></div>
<div class="vs" style="left:944px;top:482px;height:20px;background:#eeeeee"></div>
<div class="c" style="left:503.6px;top:482px;color:#000">24</div>
<div class="c" style="left:538.6px;top:482px;color:#000">026200008</div>
<div class="c" style="left:611.6px;top:482px;color:#000">1</div>
<div class="c" style="left:646.6px;top:482px;color:#000">026200008</div>
<div class="c d" style="left:731px;top:482px;color:#000">WASHER</div>
<svg class="ic" style="left:343.7px;top:485.6px" width="10.4" height="10.4" viewBox="0 0 11 11"><g fill="#84b936" transform="rotate(22.5 5.5 5.5)"><circle cx="5.5" cy="5.5" r="4"/><rect x="4.3" y="0" width="2.4" height="11" rx="0.6"/><rect x="0" y="4.3" width="11" height="2.4" rx="0.6"/><rect x="4.3" y="0" width="2.4" height="11" rx="0.6" transform="rotate(45 5.5 5.5)"/><rect x="4.3" y="0" width="2.4" height="11" rx="0.6" transform="rotate(-45 5.5 5.5)"/></g><circle cx="5.5" cy="5.5" r="2.1" fill="#b5db7a"/><circle cx="5.5" cy="5.5" r="1.5" fill="#fff"/></svg>
<svg class="ic" style="left:359px;top:484px" width="17" height="14" viewBox="0 0 17 14"><path d="M0.5 0.6 L2.6 2.2" stroke="#3d6ba6" stroke-width="1.3" fill="none"/><path d="M2.8 2.7 L16.2 2.9 L13 8 L4 8 Z" fill="#3d6ba6" stroke="#3d6ba6" stroke-width="1"/><rect x="4.55" y="3.5999999999999996" width="1.5" height="1.4" fill="#fff"/><rect x="6.55" y="3.5999999999999996" width="1.5" height="1.4" fill="#fff"/><rect x="8.55" y="3.5999999999999996" width="1.5" height="1.4" fill="#fff"/><rect x="10.55" y="3.5999999999999996" width="1.5" height="1.4" fill="#fff"/><rect x="12.55" y="3.5999999999999996" width="1.5" height="1.4" fill="#fff"/><rect x="4.55" y="5.8" width="1.5" height="1.4" fill="#fff"/><rect x="6.55" y="5.8" width="1.5" height="1.4" fill="#fff"/><rect x="8.55" y="5.8" width="1.5" height="1.4" fill="#fff"/><rect x="10.55" y="5.8" width="1.5" height="1.4" fill="#fff"/><rect x="12.55" y="5.8" width="1.5" height="1.4" fill="#fff"/><path d="M4 8 V10.8 H15.2" stroke="#3d6ba6" stroke-width="1.2" fill="none"/><rect x="4.3" y="11.5" width="2.2" height="1.8" fill="#3d6ba6"/><rect x="12.6" y="11.5" width="2.2" height="1.8" fill="#3d6ba6"/></svg>
<svg class="ic" style="left:378px;top:484px" width="14" height="14" viewBox="0 0 14 14"><defs><radialGradient id="g378484" cx="0.45" cy="0.4" r="0.6"><stop offset="0" stop-color="#ffffff"/><stop offset="0.55" stop-color="#dde9f3"/><stop offset="0.8" stop-color="#b8d1e8"/><stop offset="1" stop-color="#93b9dc"/></radialGradient></defs><circle cx="7" cy="7" r="7" fill="url(#g378484)"/><rect x="6.1" y="3.2" width="1.9" height="1.8" fill="#2b5f9a"/><rect x="6.1" y="6" width="1.9" height="4.8" fill="#2b5f9a"/></svg>
<div class="row" style="top:502px;background:#fff;border-bottom-color:#eeeeee"></div>
<div class="vs" style="left:435px;top:502px;height:20px;background:#eeeeee"></div>
<div class="vs" style="left:500px;top:502px;height:20px;background:#eeeeee"></div>
<div class="vs" style="left:535px;top:502px;height:20px;background:#eeeeee"></div>
<div class="vs" style="left:608px;top:502px;height:20px;background:#eeeeee"></div>
<div class="vs" style="left:643px;top:502px;height:20px;background:#eeeeee"></div>
<div class="vs" style="left:727px;top:502px;height:20px;background:#eeeeee"></div>
<div class="vs" style="left:850px;top:502px;height:20px;background:#eeeeee"></div>
<div class="vs" style="left:902px;top:502px;height:20px;background:#eeeeee"></div>
<div class="vs" style="left:944px;top:502px;height:20px;background:#eeeeee"></div>
<div class="c" style="left:503.6px;top:502px;color:#000">25</div>
<div class="c" style="left:538.6px;top:502px;color:#000">125156180</div>
<div class="c" style="left:611.6px;top:502px;color:#000">1</div>
<div class="c" style="left:646.6px;top:502px;color:#000">125156180</div>
<div class="c d" style="left:731px;top:502px;color:#000">ARM</div>
<svg class="ic" style="left:343.7px;top:505.6px" width="10.4" height="10.4" viewBox="0 0 11 11"><g fill="#84b936" transform="rotate(22.5 5.5 5.5)"><circle cx="5.5" cy="5.5" r="4"/><rect x="4.3" y="0" width="2.4" height="11" rx="0.6"/><rect x="0" y="4.3" width="11" height="2.4" rx="0.6"/><rect x="4.3" y="0" width="2.4" height="11" rx="0.6" transform="rotate(45 5.5 5.5)"/><rect x="4.3" y="0" width="2.4" height="11" rx="0.6" transform="rotate(-45 5.5 5.5)"/></g><circle cx="5.5" cy="5.5" r="2.1" fill="#b5db7a"/><circle cx="5.5" cy="5.5" r="1.5" fill="#fff"/></svg>
<svg class="ic" style="left:359px;top:504px" width="17" height="14" viewBox="0 0 17 14"><path d="M0.5 0.6 L2.6 2.2" stroke="#3d6ba6" stroke-width="1.3" fill="none"/><path d="M2.8 2.7 L16.2 2.9 L13 8 L4 8 Z" fill="#3d6ba6" stroke="#3d6ba6" stroke-width="1"/><rect x="4.55" y="3.5999999999999996" width="1.5" height="1.4" fill="#fff"/><rect x="6.55" y="3.5999999999999996" width="1.5" height="1.4" fill="#fff"/><rect x="8.55" y="3.5999999999999996" width="1.5" height="1.4" fill="#fff"/><rect x="10.55" y="3.5999999999999996" width="1.5" height="1.4" fill="#fff"/><rect x="12.55" y="3.5999999999999996" width="1.5" height="1.4" fill="#fff"/><rect x="4.55" y="5.8" width="1.5" height="1.4" fill="#fff"/><rect x="6.55" y="5.8" width="1.5" height="1.4" fill="#fff"/><rect x="8.55" y="5.8" width="1.5" height="1.4" fill="#fff"/><rect x="10.55" y="5.8" width="1.5" height="1.4" fill="#fff"/><rect x="12.55" y="5.8" width="1.5" height="1.4" fill="#fff"/><path d="M4 8 V10.8 H15.2" stroke="#3d6ba6" stroke-width="1.2" fill="none"/><rect x="4.3" y="11.5" width="2.2" height="1.8" fill="#3d6ba6"/><rect x="12.6" y="11.5" width="2.2" height="1.8" fill="#3d6ba6"/></svg>
<svg class="ic" style="left:378px;top:504px" width="14" height="14" viewBox="0 0 14 14"><defs><radialGradient id="g378504" cx="0.45" cy="0.4" r="0.6"><stop offset="0" stop-color="#ffffff"/><stop offset="0.55" stop-color="#dde9f3"/><stop offset="0.8" stop-color="#b8d1e8"/><stop offset="1" stop-color="#93b9dc"/></radialGradient></defs><circle cx="7" cy="7" r="7" fill="url(#g378504)"/><rect x="6.1" y="3.2" width="1.9" height="1.8" fill="#2b5f9a"/><rect x="6.1" y="6" width="1.9" height="4.8" fill="#2b5f9a"/></svg>
<div class="row" style="top:522px;background:#fff;border-bottom-color:#eeeeee"></div>
<div class="vs" style="left:435px;top:522px;height:20px;background:#eeeeee"></div>
<div class="vs" style="left:500px;top:522px;height:20px;background:#eeeeee"></div>
<div class="vs" style="left:535px;top:522px;height:20px;background:#eeeeee"></div>
<div class="vs" style="left:608px;top:522px;height:20px;background:#eeeeee"></div>
<div class="vs" style="left:643px;top:522px;height:20px;background:#eeeeee"></div>
<div class="vs" style="left:727px;top:522px;height:20px;background:#eeeeee"></div>
<div class="vs" style="left:850px;top:522px;height:20px;background:#eeeeee"></div>
<div class="vs" style="left:902px;top:522px;height:20px;background:#eeeeee"></div>
<div class="vs" style="left:944px;top:522px;height:20px;background:#eeeeee"></div>
<div class="c" style="left:503.6px;top:522px;color:#000">26</div>
<div class="c" style="left:538.6px;top:522px;color:#000">036800006</div>
<div class="c" style="left:611.6px;top:522px;color:#000">1</div>
<div class="c" style="left:646.6px;top:522px;color:#000">036800006</div>
<div class="c d" style="left:731px;top:522px;color:#000">CIRCLIP</div>
<svg class="ic" style="left:343.7px;top:525.6px" width="10.4" height="10.4" viewBox="0 0 11 11"><g fill="#84b936" transform="rotate(22.5 5.5 5.5)"><circle cx="5.5" cy="5.5" r="4"/><rect x="4.3" y="0" width="2.4" height="11" rx="0.6"/><rect x="0" y="4.3" width="11" height="2.4" rx="0.6"/><rect x="4.3" y="0" width="2.4" height="11" rx="0.6" transform="rotate(45 5.5 5.5)"/><rect x="4.3" y="0" width="2.4" height="11" rx="0.6" transform="rotate(-45 5.5 5.5)"/></g><circle cx="5.5" cy="5.5" r="2.1" fill="#b5db7a"/><circle cx="5.5" cy="5.5" r="1.5" fill="#fff"/></svg>
<svg class="ic" style="left:359px;top:524px" width="17" height="14" viewBox="0 0 17 14"><path d="M0.5 0.6 L2.6 2.2" stroke="#3d6ba6" stroke-width="1.3" fill="none"/><path d="M2.8 2.7 L16.2 2.9 L13 8 L4 8 Z" fill="#3d6ba6" stroke="#3d6ba6" stroke-width="1"/><rect x="4.55" y="3.5999999999999996" width="1.5" height="1.4" fill="#fff"/><rect x="6.55" y="3.5999999999999996" width="1.5" height="1.4" fill="#fff"/><rect x="8.55" y="3.5999999999999996" width="1.5" height="1.4" fill="#fff"/><rect x="10.55" y="3.5999999999999996" width="1.5" height="1.4" fill="#fff"/><rect x="12.55" y="3.5999999999999996" width="1.5" height="1.4" fill="#fff"/><rect x="4.55" y="5.8" width="1.5" height="1.4" fill="#fff"/><rect x="6.55" y="5.8" width="1.5" height="1.4" fill="#fff"/><rect x="8.55" y="5.8" width="1.5" height="1.4" fill="#fff"/><rect x="10.55" y="5.8" width="1.5" height="1.4" fill="#fff"/><rect x="12.55" y="5.8" width="1.5" height="1.4" fill="#fff"/><path d="M4 8 V10.8 H15.2" stroke="#3d6ba6" stroke-width="1.2" fill="none"/><rect x="4.3" y="11.5" width="2.2" height="1.8" fill="#3d6ba6"/><rect x="12.6" y="11.5" width="2.2" height="1.8" fill="#3d6ba6"/></svg>
<svg class="ic" style="left:378px;top:524px" width="14" height="14" viewBox="0 0 14 14"><defs><radialGradient id="g378524" cx="0.45" cy="0.4" r="0.6"><stop offset="0" stop-color="#ffffff"/><stop offset="0.55" stop-color="#dde9f3"/><stop offset="0.8" stop-color="#b8d1e8"/><stop offset="1" stop-color="#93b9dc"/></radialGradient></defs><circle cx="7" cy="7" r="7" fill="url(#g378524)"/><rect x="6.1" y="3.2" width="1.9" height="1.8" fill="#2b5f9a"/><rect x="6.1" y="6" width="1.9" height="4.8" fill="#2b5f9a"/></svg>
<div class="row" style="top:542px;background:#fff;border-bottom-color:#eeeeee"></div>
<div class="vs" style="left:435px;top:542px;height:20px;background:#eeeeee"></div>
<div class="vs" style="left:500px;top:542px;height:20px;background:#eeeeee"></div>
<div class="vs" style="left:535px;top:542px;height:20px;background:#eeeeee"></div>
<div class="vs" style="left:608px;top:542px;height:20px;background:#eeeeee"></div>
<div class="vs" style="left:643px;top:542px;height:20px;background:#eeeeee"></div>
<div class="vs" style="left:727px;top:542px;height:20px;background:#eeeeee"></div>
<div class="vs" style="left:850px;top:542px;height:20px;background:#eeeeee"></div>
<div class="vs" style="left:902px;top:542px;height:20px;background:#eeeeee"></div>
<div class="vs" style="left:944px;top:542px;height:20px;background:#eeeeee"></div>
<div class="c" style="left:503.6px;top:542px;color:#000">27</div>
<div class="c" style="left:538.6px;top:542px;color:#000">052100050</div>
<div class="c" style="left:611.6px;top:542px;color:#000">1</div>
<div class="c" style="left:646.6px;top:542px;color:#000">052100050</div>
<div class="c d" style="left:731px;top:542px;color:#000">SEAL - O RING</div>
<svg class="ic" style="left:343.7px;top:545.6px" width="10.4" height="10.4" viewBox="0 0 11 11"><g fill="#84b936" transform="rotate(22.5 5.5 5.5)"><circle cx="5.5" cy="5.5" r="4"/><rect x="4.3" y="0" width="2.4" height="11" rx="0.6"/><rect x="0" y="4.3" width="11" height="2.4" rx="0.6"/><rect x="4.3" y="0" width="2.4" height="11" rx="0.6" transform="rotate(45 5.5 5.5)"/><rect x="4.3" y="0" width="2.4" height="11" rx="0.6" transform="rotate(-45 5.5 5.5)"/></g><circle cx="5.5" cy="5.5" r="2.1" fill="#b5db7a"/><circle cx="5.5" cy="5.5" r="1.5" fill="#fff"/></svg>
<svg class="ic" style="left:359px;top:544px" width="17" height="14" viewBox="0 0 17 14"><path d="M0.5 0.6 L2.6 2.2" stroke="#3d6ba6" stroke-width="1.3" fill="none"/><path d="M2.8 2.7 L16.2 2.9 L13 8 L4 8 Z" fill="#3d6ba6" stroke="#3d6ba6" stroke-width="1"/><rect x="4.55" y="3.5999999999999996" width="1.5" height="1.4" fill="#fff"/><rect x="6.55" y="3.5999999999999996" width="1.5" height="1.4" fill="#fff"/><rect x="8.55" y="3.5999999999999996" width="1.5" height="1.4" fill="#fff"/><rect x="10.55" y="3.5999999999999996" width="1.5" height="1.4" fill="#fff"/><rect x="12.55" y="3.5999999999999996" width="1.5" height="1.4" fill="#fff"/><rect x="4.55" y="5.8" width="1.5" height="1.4" fill="#fff"/><rect x="6.55" y="5.8" width="1.5" height="1.4" fill="#fff"/><rect x="8.55" y="5.8" width="1.5" height="1.4" fill="#fff"/><rect x="10.55" y="5.8" width="1.5" height="1.4" fill="#fff"/><rect x="12.55" y="5.8" width="1.5" height="1.4" fill="#fff"/><path d="M4 8 V10.8 H15.2" stroke="#3d6ba6" stroke-width="1.2" fill="none"/><rect x="4.3" y="11.5" width="2.2" height="1.8" fill="#3d6ba6"/><rect x="12.6" y="11.5" width="2.2" height="1.8" fill="#3d6ba6"/></svg>
<svg class="ic" style="left:378px;top:544px" width="14" height="14" viewBox="0 0 14 14"><defs><radialGradient id="g378544" cx="0.45" cy="0.4" r="0.6"><stop offset="0" stop-color="#ffffff"/><stop offset="0.55" stop-color="#dde9f3"/><stop offset="0.8" stop-color="#b8d1e8"/><stop offset="1" stop-color="#93b9dc"/></radialGradient></defs><circle cx="7" cy="7" r="7" fill="url(#g378544)"/><rect x="6.1" y="3.2" width="1.9" height="1.8" fill="#2b5f9a"/><rect x="6.1" y="6" width="1.9" height="4.8" fill="#2b5f9a"/></svg>
<div class="vs" style="left:435px;top:22px;height:20px;background:#fff"></div>
<div class="vs" style="left:500px;top:22px;height:20px;background:#fff"></div>
<div class="vs" style="left:535px;top:22px;height:20px;background:#fff"></div>
<div class="vs" style="left:608px;top:22px;height:20px;background:#fff"></div>
<div class="vs" style="left:643px;top:22px;height:20px;background:#fff"></div>
<div class="vs" style="left:727px;top:22px;height:20px;background:#fff"></div>
<div class="vs" style="left:850px;top:22px;height:20px;background:#fff"></div>
<div class="vs" style="left:902px;top:22px;height:20px;background:#fff"></div>
<div class="vs" style="left:944px;top:22px;height:20px;background:#fff"></div>
<div style="position:absolute;left:1027px;top:508px;width:43px;height:52px;background:#fff"></div><svg style="position:absolute;left:0;top:0" width="1070" height="560" viewBox="0 0 1070 560"><circle cx="1038.5" cy="519.9" r="6.65" fill="none" stroke="#1257a3" stroke-width="2.9"/><line x1="1034.2" y1="524.1" x2="1042.7" y2="515.6" stroke="#1257a3" stroke-width="2.5"/><circle cx="1055.0" cy="519.9" r="6.65" fill="none" stroke="#1257a3" stroke-width="2.9"/><line x1="1050.8" y1="515.6" x2="1059.2" y2="524.1" stroke="#1257a3" stroke-width="2.5"/><circle cx="1038.5" cy="536.4" r="6.65" fill="none" stroke="#1257a3" stroke-width="2.9"/><line x1="1034.2" y1="532.1" x2="1042.7" y2="540.6" stroke="#1257a3" stroke-width="2.5"/><circle cx="1055.0" cy="536.4" r="6.65" fill="none" stroke="#1257a3" stroke-width="2.9"/><line x1="1050.8" y1="540.6" x2="1059.2" y2="532.1" stroke="#1257a3" stroke-width="2.5"/><rect x="1045.1" y="511.3" width="3.2" height="3.2" transform="rotate(45 1046.7 512.9)" fill="#1257a3"/><rect x="1045.1" y="541.7" width="3.2" height="3.2" transform="rotate(45 1046.7 543.3)" fill="#1257a3"/><rect x="1029.9" y="526.5" width="3.2" height="3.2" transform="rotate(45 1031.5 528.1)" fill="#1257a3"/><rect x="1060.3" y="526.5" width="3.2" height="3.2" transform="rotate(45 1061.9 528.1)" fill="#1257a3"/><text x="1029" y="557.2" font-family="Liberation Sans" font-weight="bold" font-size="10.6" fill="#1257a3" textLength="36" lengthAdjust="spacingAndGlyphs">Perkins</text><circle cx="1067" cy="552" r="0.8" fill="#1257a3"/></svg>
<svg style="position:absolute;left:0;top:0" width="60" height="200" viewBox="0 0 60 200"><defs><linearGradient id="bg" x1="0" y1="0" x2="0" y2="1"><stop offset="0" stop-color="#f4f4f4"/><stop offset="1" stop-color="#d4d4d4"/></linearGradient><linearGradient id="bg2" x1="0" y1="0" x2="1" y2="0"><stop offset="0" stop-color="#e8e8e8"/><stop offset="1" stop-color="#a9a9a9"/></linearGradient></defs><rect x="19.5" y="34.5" width="15" height="14" rx="1" fill="url(#bg)" stroke="#9a9a9a" stroke-width="1"/><line x1="20.5" y1="35.5" x2="33.5" y2="35.5" stroke="#fff" stroke-width="1"/><path d="M35 40 L37 42 L35 44 Z" fill="#e8e8e8"/><rect x="22" y="40.3" width="11" height="2.4" fill="#4d4d4d"/><rect x="26.3" y="36.2" width="2.4" height="11" fill="#4d4d4d"/><rect x="19.5" y="57.5" width="15" height="14" rx="1" fill="url(#bg)" stroke="#9a9a9a" stroke-width="1"/><line x1="20.5" y1="58.5" x2="33.5" y2="58.5" stroke="#fff" stroke-width="1"/><path d="M20 62 L18 64.5 L20 67 Z" fill="#e8e8e8"/><rect x="22" y="63.6" width="11" height="2.6" fill="#4d4d4d"/><rect x="19.5" y="86.5" width="15" height="14" rx="1" fill="url(#bg)" stroke="#9a9a9a" stroke-width="1"/><line x1="20.5" y1="87.5" x2="33.5" y2="87.5" stroke="#fff" stroke-width="1"/><rect x="22.3" y="89.3" width="4" height="4" fill="#6a6a6a"/><rect x="22.3" y="94.8" width="4" height="4" fill="#6a6a6a"/><rect x="27.8" y="89.3" width="4" height="4" fill="#6a6a6a"/><rect x="27.8" y="94.8" width="4" height="4" fill="#6a6a6a"/><line x1="27.5" y1="88" x2="27.5" y2="100" stroke="#fff" stroke-width="0.8"/><line x1="21" y1="94" x2="34" y2="94" stroke="#fff" stroke-width="0.8"/><rect x="19.5" y="109.5" width="15" height="14" rx="1" fill="url(#bg)" stroke="#9a9a9a" stroke-width="1"/><line x1="20.5" y1="110.5" x2="33.5" y2="110.5" stroke="#fff" stroke-width="1"/><rect x="23.2" y="112.9" width="8.6" height="8" fill="#d8d8d8" stroke="#555" stroke-width="1.4"/><rect x="18.5" y="162.5" width="4" height="4" fill="#d0d0d0" stroke="#7a7a7a" stroke-width="0.9"/><rect x="18.5" y="167.5" width="4" height="4" fill="#d0d0d0" stroke="#7a7a7a" stroke-width="0.9"/><rect x="18.5" y="172.5" width="4" height="4" fill="#d0d0d0" stroke="#7a7a7a" stroke-width="0.9"/><rect x="24" y="162" width="12" height="15" fill="url(#bg2)"/><line x1="24.5" y1="162" x2="24.5" y2="177" stroke="#f8f8f8" stroke-width="1"/><path d="M26 169.5 H32 M30 166.8 L33.5 169.5 L30 172.2" stroke="#4d4d4d" stroke-width="1.8" fill="none"/></svg>
</body></html>
